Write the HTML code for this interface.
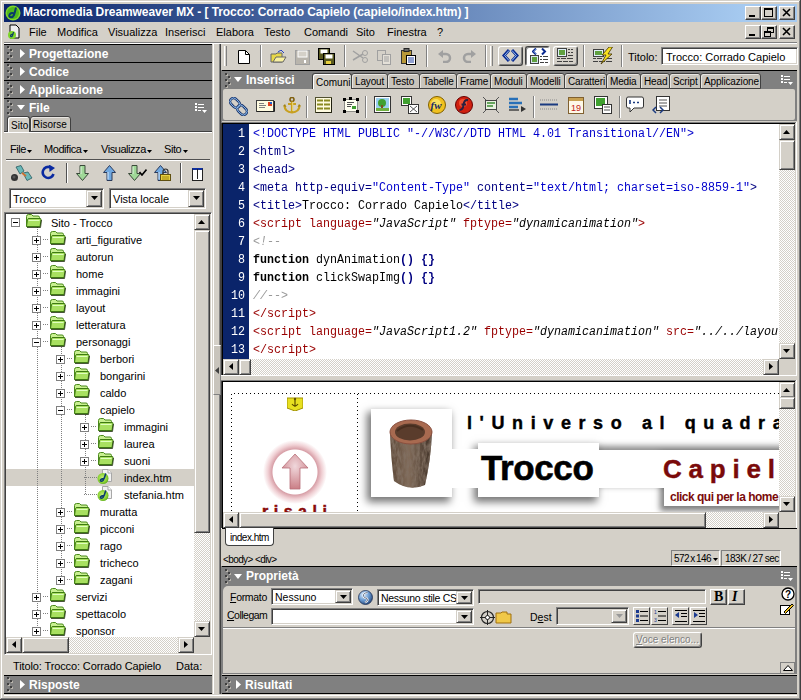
<!DOCTYPE html><html><head><meta charset="utf-8"><style>
*{margin:0;padding:0;box-sizing:content-box}
html,body{width:801px;height:700px;overflow:hidden;background:#D4D0C8}
body{position:relative;font-family:"Liberation Sans",sans-serif;font-size:11px;color:#000}
.p{position:absolute}
.t{white-space:nowrap;line-height:13px}
.rb{background:#D4D0C8;border:1px solid;border-color:#fff #404040 #404040 #fff;box-shadow:inset -1px -1px 0 #808080, inset 1px 1px 0 #D4D0C8}
.sb{background:#D4D0C8;border:1px solid;border-color:#D4D0C8 #404040 #404040 #D4D0C8;box-shadow:inset 1px 1px 0 #fff, inset -1px -1px 0 #808080}
.sk{border:1px solid;border-color:#808080 #fff #fff #808080;box-shadow:inset 1px 1px 0 #404040, inset -1px -1px 0 #D4D0C8}
.hdr{background:#808080;color:#fff;font-weight:bold;font-size:12px}
.mono{font-family:"Liberation Mono",monospace;font-size:11.67px}
.grip{position:absolute;width:6px;height:15px;background-image:linear-gradient(#404040,#404040),linear-gradient(#404040,#404040),linear-gradient(#404040,#404040),linear-gradient(#404040,#404040),linear-gradient(#404040,#404040);background-size:2px 2px;background-repeat:no-repeat;background-position:0 0,3px 3px,0 6px,3px 9px,0 12px}
.griph{position:absolute;width:6px;height:15px;background-image:linear-gradient(#B8B4AC,#B8B4AC),linear-gradient(#B8B4AC,#B8B4AC),linear-gradient(#B8B4AC,#B8B4AC),linear-gradient(#B8B4AC,#B8B4AC),linear-gradient(#B8B4AC,#B8B4AC);background-size:2px 2px;background-repeat:no-repeat;background-position:0 0,3px 3px,0 6px,3px 9px,0 12px}
</style></head><body>

<div class="p" style="left:0px;top:0px;width:801px;height:700px;background:#D4D0C8;"></div>
<div class="p" style="left:1px;top:1px;width:799px;height:1px;background:#fff;"></div>
<div class="p" style="left:1px;top:1px;width:1px;height:698px;background:#fff;"></div>
<div class="p" style="left:0px;top:699px;width:801px;height:1px;background:#404040;"></div>
<div class="p" style="left:800px;top:0px;width:1px;height:700px;background:#404040;"></div>
<div class="p" style="left:1px;top:698px;width:799px;height:1px;background:#808080;"></div>
<div class="p" style="left:799px;top:1px;width:1px;height:698px;background:#808080;"></div>
<div class="p" style="left:4px;top:4px;width:793px;height:18px;background:linear-gradient(to right,#0A246A 0px,#A6CAF0 741px);"></div>
<svg class="p" style="left:5px;top:5px" width="16" height="16" viewBox="0 0 16 16"><circle cx="8" cy="8" r="7.5" fill="#7ED62A"/><circle cx="8" cy="8" r="6" fill="#4FB81C"/><path d="M11 2.5 Q10 7 9 10 Q7.5 13 5 12 Q3.5 11 5 9 Q6.5 7.5 9 8.5" stroke="#0A3A6A" stroke-width="2" fill="none"/></svg>
<div class="p t" style="left:23px;top:6px;color:#fff;font-weight:bold;font-size:12px;letter-spacing:-0.07px;">Macromedia Dreamweaver MX - [ Trocco: Corrado Capielo (capielo/index.htm) ]</div>
<div class="p rb" style="left:745px;top:6px;width:14px;height:12px;"></div>
<div class="p rb" style="left:761px;top:6px;width:14px;height:12px;"></div>
<div class="p rb" style="left:779px;top:6px;width:14px;height:12px;"></div>
<div class="p" style="left:749px;top:15px;width:6px;height:2px;background:#000;"></div>
<div class="p" style="left:764px;top:8px;width:9px;height:9px;border:1px solid #000;border-top-width:2px;box-sizing:border-box;"></div>
<svg class="p" style="left:782px;top:8px" width="10" height="9"><path d="M1 1 L8 8 M8 1 L1 8" stroke="#000" stroke-width="1.6"/></svg>
<svg class="p" style="left:6px;top:24px" width="16" height="16" viewBox="0 0 16 16"><path d="M4 1 H10 L13 4 V14 H4 Z" fill="#eee" stroke="#000"/><circle cx="6" cy="11" r="4" fill="#7ED62A"/><path d="M7.5 8 Q7 11 6 12.5 Q4.5 13 4.5 11.5 Q5 10 7 10.5" stroke="#0A3A6A" stroke-width="1.2" fill="none"/></svg>
<div class="p t" style="left:29px;top:26px;">File</div>
<div class="p t" style="left:57px;top:26px;">Modifica</div>
<div class="p t" style="left:108px;top:26px;">Visualizza</div>
<div class="p t" style="left:165px;top:26px;">Inserisci</div>
<div class="p t" style="left:216px;top:26px;">Elabora</div>
<div class="p t" style="left:264px;top:26px;">Testo</div>
<div class="p t" style="left:304px;top:26px;">Comandi</div>
<div class="p t" style="left:356px;top:26px;">Sito</div>
<div class="p t" style="left:387px;top:26px;">Finestra</div>
<div class="p t" style="left:437px;top:26px;">?</div>
<div class="p rb" style="left:745px;top:25px;width:14px;height:12px;"></div>
<div class="p rb" style="left:761px;top:25px;width:14px;height:12px;"></div>
<div class="p rb" style="left:779px;top:25px;width:14px;height:12px;"></div>
<div class="p" style="left:749px;top:34px;width:6px;height:2px;background:#000;"></div>
<svg class="p" style="left:764px;top:27px" width="10" height="10"><rect x="3.5" y="0.5" width="6" height="5" fill="none" stroke="#000"/><rect x="3" y="0" width="7" height="2" fill="#000"/><rect x="0.5" y="4.5" width="6" height="5" fill="#D4D0C8" stroke="#000"/><rect x="0" y="4" width="7" height="2" fill="#000"/></svg>
<svg class="p" style="left:782px;top:27px" width="10" height="9"><path d="M1 1 L8 8 M8 1 L1 8" stroke="#000" stroke-width="1.6"/></svg>
<div class="p" style="left:4px;top:42px;width:793px;height:1px;background:#808080;"></div>
<div class="p" style="left:4px;top:43px;width:793px;height:1px;background:#fff;"></div>
<div class="p" style="left:4px;top:44px;width:208px;height:1px;background:#000;"></div>
<div class="p" style="left:4px;top:45px;width:208px;height:17px;background:#808080;"></div>
<div class="griph" style="left:8px;top:47px;"></div>
<div class="grip" style="left:7px;top:46px;"></div>
<svg class="p" style="left:20px;top:49px" width="5" height="9"><path d="M0 0 V9 L5 4.5 Z" fill="#fff"/></svg>
<div class="p t" style="left:29px;top:47px;color:#fff;font-weight:bold;font-size:12px;line-height:14px;">Progettazione</div>
<div class="p" style="left:4px;top:62px;width:208px;height:1px;background:#000;"></div>
<div class="p" style="left:4px;top:63px;width:208px;height:17px;background:#808080;"></div>
<div class="griph" style="left:8px;top:65px;"></div>
<div class="grip" style="left:7px;top:64px;"></div>
<svg class="p" style="left:20px;top:67px" width="5" height="9"><path d="M0 0 V9 L5 4.5 Z" fill="#fff"/></svg>
<div class="p t" style="left:29px;top:65px;color:#fff;font-weight:bold;font-size:12px;line-height:14px;">Codice</div>
<div class="p" style="left:4px;top:80px;width:208px;height:1px;background:#000;"></div>
<div class="p" style="left:4px;top:81px;width:208px;height:17px;background:#808080;"></div>
<div class="griph" style="left:8px;top:83px;"></div>
<div class="grip" style="left:7px;top:82px;"></div>
<svg class="p" style="left:20px;top:85px" width="5" height="9"><path d="M0 0 V9 L5 4.5 Z" fill="#fff"/></svg>
<div class="p t" style="left:29px;top:83px;color:#fff;font-weight:bold;font-size:12px;line-height:14px;">Applicazione</div>
<div class="p" style="left:4px;top:98px;width:208px;height:1px;background:#000;"></div>
<div class="p" style="left:4px;top:99px;width:208px;height:33px;background:#808080;"></div>
<div class="griph" style="left:8px;top:101px;"></div>
<div class="grip" style="left:7px;top:100px;"></div>
<svg class="p" style="left:17px;top:105px" width="8" height="5"><path d="M0 0 H8 L4 5 Z" fill="#fff"/></svg>
<div class="p t" style="left:29px;top:101px;color:#fff;font-weight:bold;font-size:12px;line-height:14px;">File</div>
<svg class="p" style="left:195px;top:103px" width="13" height="11"><path d="M0 0 H2 V2 H0 Z M0 3 H2 V5 H0 Z M0 6 H2 V8 H0 Z M3 1 H9 V2 H3 Z M3 4 H9 V5 H3 Z M3 7 H6 V8 H3 Z M7 7 H12 L9.5 10 Z" fill="#fff"/></svg>
<div class="p" style="left:4px;top:131px;width:208px;height:1px;background:#404040;"></div>
<div class="p t" style="left:30px;top:116px;width:39px;height:14px;background:#C8C4BC;border:1px solid #404040;border-radius:3px 3px 0 0;font-size:10px;box-shadow:inset 1px 1px 0 #E8E6E2;"><span style="position:absolute;left:2px;top:1px">Risorse</span></div>
<div class="p t" style="left:7px;top:116px;width:21px;height:16px;background:#D4D0C8;border:1px solid #404040;border-bottom:none;border-radius:3px 3px 0 0;font-size:10px;box-shadow:inset 1px 1px 0 #fff;"><span style="position:absolute;left:3px;top:2px">Sito</span></div>
<div class="p" style="left:4px;top:132px;width:208px;height:1px;background:#fff;"></div>
<div class="p t" style="left:10px;top:143px;letter-spacing:-0.45px;">File</div>
<div class="p t" style="left:44px;top:143px;letter-spacing:-0.45px;">Modifica</div>
<div class="p t" style="left:101px;top:143px;letter-spacing:-0.45px;">Visualizza</div>
<div class="p t" style="left:164px;top:143px;letter-spacing:-0.45px;">Sito</div>
<svg class="p" style="left:27px;top:150px" width="5" height="3"><path d="M0 0 H5 L2.5 3 Z" fill="#000"/></svg>
<svg class="p" style="left:83px;top:150px" width="5" height="3"><path d="M0 0 H5 L2.5 3 Z" fill="#000"/></svg>
<svg class="p" style="left:147px;top:150px" width="5" height="3"><path d="M0 0 H5 L2.5 3 Z" fill="#000"/></svg>
<svg class="p" style="left:183px;top:150px" width="5" height="3"><path d="M0 0 H5 L2.5 3 Z" fill="#000"/></svg>
<div class="p" style="left:6px;top:159px;width:204px;height:1px;background:#505050;"></div>
<div class="p" style="left:6px;top:160px;width:204px;height:1px;background:#fff;"></div>
<div class="p" style="left:66px;top:163px;width:1px;height:20px;background:#505050;"></div>
<div class="p" style="left:67px;top:163px;width:1px;height:20px;background:#fff;"></div>
<div class="p" style="left:180px;top:163px;width:1px;height:20px;background:#505050;"></div>
<div class="p" style="left:181px;top:163px;width:1px;height:20px;background:#fff;"></div>
<svg class="p" style="left:11px;top:165px" width="22" height="17" viewBox="0 0 22 17"><circle cx="3.5" cy="12.5" r="3.5" fill="#333"/><circle cx="3" cy="12" r="1.5" fill="#555"/><path d="M5 2 L10 0.5 L13 6 L9 9 Z" fill="#6AB8B8" stroke="#2A5A60" stroke-width="0.8"/><path d="M12 8 L17 7 L21 13 L16 15.5 Z" fill="#6AB8B8" stroke="#2A5A60" stroke-width="0.8"/><path d="M11 8 L15 11" stroke="#D07030" stroke-width="1.6"/></svg>
<svg class="p" style="left:41px;top:165px" width="15" height="15" viewBox="0 0 15 15"><path d="M12.5 9 A5.5 5.5 0 1 1 9.5 2.4" stroke="#0A2AA0" stroke-width="2.6" fill="none"/><path d="M8 -0.5 L14 3 L8.5 7 Z" fill="#0A2AA0"/></svg>
<svg class="p" style="left:76px;top:165px" width="13" height="16" viewBox="0 0 13 16"><path d="M4 0.5 H9 V8.5 H12.5 L6.5 15.5 L0.5 8.5 H4 Z" fill="#A0D898" stroke="#3A4A3A" stroke-width="1"/><path d="M5 1.5 V9" stroke="#E0F8E0" stroke-width="1"/></svg>
<svg class="p" style="left:103px;top:165px" width="13" height="16" viewBox="0 0 13 16"><path d="M4 15.5 H9 V7.5 H12.5 L6.5 0.5 L0.5 7.5 H4 Z" fill="#70A8E0" stroke="#2A3A5A" stroke-width="1"/><path d="M5 7 V14.5" stroke="#D8ECFF" stroke-width="1"/></svg>
<svg class="p" style="left:128px;top:165px" width="13" height="16" viewBox="0 0 13 16"><path d="M4 0.5 H9 V8.5 H12.5 L6.5 15.5 L0.5 8.5 H4 Z" fill="#A0D898" stroke="#3A4A3A" stroke-width="1"/><path d="M5 1.5 V9" stroke="#E0F8E0" stroke-width="1"/></svg>
<svg class="p" style="left:139px;top:169px" width="8" height="7"><path d="M0.5 3 L3 6 L7.5 0.5" stroke="#000" stroke-width="1.6" fill="none"/></svg>
<svg class="p" style="left:154px;top:165px" width="13" height="16" viewBox="0 0 13 16"><path d="M4 15.5 H9 V7.5 H12.5 L6.5 0.5 L0.5 7.5 H4 Z" fill="#70A8E0" stroke="#2A3A5A" stroke-width="1"/><path d="M5 7 V14.5" stroke="#D8ECFF" stroke-width="1"/></svg>
<svg class="p" style="left:160px;top:168px" width="11" height="13"><path d="M3 6 V3.5 A2.5 2.5 0 0 1 8 3.5 V6" stroke="#333" stroke-width="1.2" fill="none"/><rect x="0.5" y="6.5" width="10" height="6" fill="#E8D040" stroke="#605010"/><path d="M2 9 H9 M2 11 H9" stroke="#A08810"/></svg>
<div class="p" style="left:192px;top:168px;width:9px;height:10px;background:#fff;border:1px solid #222;border-top:2px solid #1030A0;"></div>
<div class="p" style="left:197px;top:169px;width:1px;height:10px;background:#222;"></div>
<div class="p sk" style="left:9px;top:188px;width:93px;height:19px;background:#fff;"></div>
<div class="p t" style="left:13px;top:193px;font-size:11px;">Trocco</div>
<div class="p sb" style="left:86px;top:190px;width:14px;height:15px;"></div>
<svg class="p" style="left:91px;top:196px" width="7" height="4"><path d="M0 0 H7 L3.5 4 Z" fill="#000"/></svg>
<div class="p sk" style="left:109px;top:188px;width:95px;height:19px;background:#fff;"></div>
<div class="p t" style="left:113px;top:193px;font-size:11px;">Vista locale</div>
<div class="p sb" style="left:188px;top:190px;width:14px;height:15px;"></div>
<svg class="p" style="left:193px;top:196px" width="7" height="4"><path d="M0 0 H7 L3.5 4 Z" fill="#000"/></svg>
<div class="p sk" style="left:4px;top:212px;width:206px;height:441px;background:#fff;"></div>
<div class="p" style="left:6px;top:469px;width:188px;height:17px;background:#D4D0C8;"></div>
<div class="p" style="left:37px;top:227px;width:1px;height:403px;background-image:linear-gradient(#808080 1px,transparent 1px);background-size:1px 2px;"></div>
<div class="p" style="left:61px;top:347px;width:1px;height:232px;background-image:linear-gradient(#808080 1px,transparent 1px);background-size:1px 2px;"></div>
<div class="p" style="left:85px;top:415px;width:1px;height:80px;background-image:linear-gradient(#808080 1px,transparent 1px);background-size:1px 2px;"></div>
<div class="p" style="left:11px;top:218px;width:7px;height:7px;border:1px solid #808080;background:#fff;"></div>
<div class="p" style="left:13px;top:222px;width:5px;height:1px;background:#000;"></div>
<svg class="p" style="left:25px;top:214px" width="17" height="14" viewBox="0 0 17 14"><path d="M1.5 12.5 V2.5 Q1.5 0.5 3.5 0.5 H6.5 L8 2 H13 Q14.5 2 14.5 3.5 V5" fill="#C8F090" stroke="#4A8A1A"/><path d="M1.5 12.5 L2.5 5.5 Q2.7 4.5 4 4.5 H15 Q16.3 4.5 16 5.8 L15 12.5 Z" fill="#A8E060" stroke="#3E7A12"/><path d="M3.5 6.5 H14.5" stroke="#E0FFC0" stroke-width="1"/><path d="M2 13.5 H15.5 L16.5 6" stroke="#1A2A08" stroke-width="1" fill="none" opacity="0.8"/></svg>
<div class="p t" style="left:51px;top:217px;font-size:11px;">Sito - Trocco</div>
<div class="p" style="left:32px;top:236px;width:7px;height:7px;border:1px solid #808080;background:#fff;"></div>
<div class="p" style="left:34px;top:240px;width:5px;height:1px;background:#000;"></div>
<div class="p" style="left:36px;top:238px;width:1px;height:5px;background:#000;"></div>
<div class="p" style="left:43px;top:239px;width:6px;height:1px;background-image:linear-gradient(to right,#808080 1px,transparent 1px);background-size:2px 1px;"></div>
<svg class="p" style="left:49px;top:231px" width="17" height="14" viewBox="0 0 17 14"><path d="M1.5 12.5 V2.5 Q1.5 0.5 3.5 0.5 H6.5 L8 2 H13 Q14.5 2 14.5 3.5 V5" fill="#C8F090" stroke="#4A8A1A"/><path d="M1.5 12.5 L2.5 5.5 Q2.7 4.5 4 4.5 H15 Q16.3 4.5 16 5.8 L15 12.5 Z" fill="#A8E060" stroke="#3E7A12"/><path d="M3.5 6.5 H14.5" stroke="#E0FFC0" stroke-width="1"/><path d="M2 13.5 H15.5 L16.5 6" stroke="#1A2A08" stroke-width="1" fill="none" opacity="0.8"/></svg>
<div class="p t" style="left:76px;top:234px;font-size:11px;">arti_figurative</div>
<div class="p" style="left:32px;top:253px;width:7px;height:7px;border:1px solid #808080;background:#fff;"></div>
<div class="p" style="left:34px;top:257px;width:5px;height:1px;background:#000;"></div>
<div class="p" style="left:36px;top:255px;width:1px;height:5px;background:#000;"></div>
<div class="p" style="left:43px;top:256px;width:6px;height:1px;background-image:linear-gradient(to right,#808080 1px,transparent 1px);background-size:2px 1px;"></div>
<svg class="p" style="left:49px;top:248px" width="17" height="14" viewBox="0 0 17 14"><path d="M1.5 12.5 V2.5 Q1.5 0.5 3.5 0.5 H6.5 L8 2 H13 Q14.5 2 14.5 3.5 V5" fill="#C8F090" stroke="#4A8A1A"/><path d="M1.5 12.5 L2.5 5.5 Q2.7 4.5 4 4.5 H15 Q16.3 4.5 16 5.8 L15 12.5 Z" fill="#A8E060" stroke="#3E7A12"/><path d="M3.5 6.5 H14.5" stroke="#E0FFC0" stroke-width="1"/><path d="M2 13.5 H15.5 L16.5 6" stroke="#1A2A08" stroke-width="1" fill="none" opacity="0.8"/></svg>
<div class="p t" style="left:76px;top:251px;font-size:11px;">autorun</div>
<div class="p" style="left:32px;top:270px;width:7px;height:7px;border:1px solid #808080;background:#fff;"></div>
<div class="p" style="left:34px;top:274px;width:5px;height:1px;background:#000;"></div>
<div class="p" style="left:36px;top:272px;width:1px;height:5px;background:#000;"></div>
<div class="p" style="left:43px;top:273px;width:6px;height:1px;background-image:linear-gradient(to right,#808080 1px,transparent 1px);background-size:2px 1px;"></div>
<svg class="p" style="left:49px;top:265px" width="17" height="14" viewBox="0 0 17 14"><path d="M1.5 12.5 V2.5 Q1.5 0.5 3.5 0.5 H6.5 L8 2 H13 Q14.5 2 14.5 3.5 V5" fill="#C8F090" stroke="#4A8A1A"/><path d="M1.5 12.5 L2.5 5.5 Q2.7 4.5 4 4.5 H15 Q16.3 4.5 16 5.8 L15 12.5 Z" fill="#A8E060" stroke="#3E7A12"/><path d="M3.5 6.5 H14.5" stroke="#E0FFC0" stroke-width="1"/><path d="M2 13.5 H15.5 L16.5 6" stroke="#1A2A08" stroke-width="1" fill="none" opacity="0.8"/></svg>
<div class="p t" style="left:76px;top:268px;font-size:11px;">home</div>
<div class="p" style="left:32px;top:287px;width:7px;height:7px;border:1px solid #808080;background:#fff;"></div>
<div class="p" style="left:34px;top:291px;width:5px;height:1px;background:#000;"></div>
<div class="p" style="left:36px;top:289px;width:1px;height:5px;background:#000;"></div>
<div class="p" style="left:43px;top:290px;width:6px;height:1px;background-image:linear-gradient(to right,#808080 1px,transparent 1px);background-size:2px 1px;"></div>
<svg class="p" style="left:49px;top:282px" width="17" height="14" viewBox="0 0 17 14"><path d="M1.5 12.5 V2.5 Q1.5 0.5 3.5 0.5 H6.5 L8 2 H13 Q14.5 2 14.5 3.5 V5" fill="#C8F090" stroke="#4A8A1A"/><path d="M1.5 12.5 L2.5 5.5 Q2.7 4.5 4 4.5 H15 Q16.3 4.5 16 5.8 L15 12.5 Z" fill="#A8E060" stroke="#3E7A12"/><path d="M3.5 6.5 H14.5" stroke="#E0FFC0" stroke-width="1"/><path d="M2 13.5 H15.5 L16.5 6" stroke="#1A2A08" stroke-width="1" fill="none" opacity="0.8"/></svg>
<div class="p t" style="left:76px;top:285px;font-size:11px;">immagini</div>
<div class="p" style="left:32px;top:304px;width:7px;height:7px;border:1px solid #808080;background:#fff;"></div>
<div class="p" style="left:34px;top:308px;width:5px;height:1px;background:#000;"></div>
<div class="p" style="left:36px;top:306px;width:1px;height:5px;background:#000;"></div>
<div class="p" style="left:43px;top:307px;width:6px;height:1px;background-image:linear-gradient(to right,#808080 1px,transparent 1px);background-size:2px 1px;"></div>
<svg class="p" style="left:49px;top:299px" width="17" height="14" viewBox="0 0 17 14"><path d="M1.5 12.5 V2.5 Q1.5 0.5 3.5 0.5 H6.5 L8 2 H13 Q14.5 2 14.5 3.5 V5" fill="#C8F090" stroke="#4A8A1A"/><path d="M1.5 12.5 L2.5 5.5 Q2.7 4.5 4 4.5 H15 Q16.3 4.5 16 5.8 L15 12.5 Z" fill="#A8E060" stroke="#3E7A12"/><path d="M3.5 6.5 H14.5" stroke="#E0FFC0" stroke-width="1"/><path d="M2 13.5 H15.5 L16.5 6" stroke="#1A2A08" stroke-width="1" fill="none" opacity="0.8"/></svg>
<div class="p t" style="left:76px;top:302px;font-size:11px;">layout</div>
<div class="p" style="left:32px;top:321px;width:7px;height:7px;border:1px solid #808080;background:#fff;"></div>
<div class="p" style="left:34px;top:325px;width:5px;height:1px;background:#000;"></div>
<div class="p" style="left:36px;top:323px;width:1px;height:5px;background:#000;"></div>
<div class="p" style="left:43px;top:324px;width:6px;height:1px;background-image:linear-gradient(to right,#808080 1px,transparent 1px);background-size:2px 1px;"></div>
<svg class="p" style="left:49px;top:316px" width="17" height="14" viewBox="0 0 17 14"><path d="M1.5 12.5 V2.5 Q1.5 0.5 3.5 0.5 H6.5 L8 2 H13 Q14.5 2 14.5 3.5 V5" fill="#C8F090" stroke="#4A8A1A"/><path d="M1.5 12.5 L2.5 5.5 Q2.7 4.5 4 4.5 H15 Q16.3 4.5 16 5.8 L15 12.5 Z" fill="#A8E060" stroke="#3E7A12"/><path d="M3.5 6.5 H14.5" stroke="#E0FFC0" stroke-width="1"/><path d="M2 13.5 H15.5 L16.5 6" stroke="#1A2A08" stroke-width="1" fill="none" opacity="0.8"/></svg>
<div class="p t" style="left:76px;top:319px;font-size:11px;">letteratura</div>
<div class="p" style="left:32px;top:338px;width:7px;height:7px;border:1px solid #808080;background:#fff;"></div>
<div class="p" style="left:34px;top:342px;width:5px;height:1px;background:#000;"></div>
<div class="p" style="left:43px;top:341px;width:6px;height:1px;background-image:linear-gradient(to right,#808080 1px,transparent 1px);background-size:2px 1px;"></div>
<svg class="p" style="left:49px;top:333px" width="17" height="14" viewBox="0 0 17 14"><path d="M1.5 12.5 V2.5 Q1.5 0.5 3.5 0.5 H6.5 L8 2 H13 Q14.5 2 14.5 3.5 V5" fill="#C8F090" stroke="#4A8A1A"/><path d="M1.5 12.5 L2.5 5.5 Q2.7 4.5 4 4.5 H15 Q16.3 4.5 16 5.8 L15 12.5 Z" fill="#A8E060" stroke="#3E7A12"/><path d="M3.5 6.5 H14.5" stroke="#E0FFC0" stroke-width="1"/><path d="M2 13.5 H15.5 L16.5 6" stroke="#1A2A08" stroke-width="1" fill="none" opacity="0.8"/></svg>
<div class="p t" style="left:76px;top:336px;font-size:11px;">personaggi</div>
<div class="p" style="left:56px;top:355px;width:7px;height:7px;border:1px solid #808080;background:#fff;"></div>
<div class="p" style="left:58px;top:359px;width:5px;height:1px;background:#000;"></div>
<div class="p" style="left:60px;top:357px;width:1px;height:5px;background:#000;"></div>
<div class="p" style="left:67px;top:358px;width:6px;height:1px;background-image:linear-gradient(to right,#808080 1px,transparent 1px);background-size:2px 1px;"></div>
<svg class="p" style="left:73px;top:350px" width="17" height="14" viewBox="0 0 17 14"><path d="M1.5 12.5 V2.5 Q1.5 0.5 3.5 0.5 H6.5 L8 2 H13 Q14.5 2 14.5 3.5 V5" fill="#C8F090" stroke="#4A8A1A"/><path d="M1.5 12.5 L2.5 5.5 Q2.7 4.5 4 4.5 H15 Q16.3 4.5 16 5.8 L15 12.5 Z" fill="#A8E060" stroke="#3E7A12"/><path d="M3.5 6.5 H14.5" stroke="#E0FFC0" stroke-width="1"/><path d="M2 13.5 H15.5 L16.5 6" stroke="#1A2A08" stroke-width="1" fill="none" opacity="0.8"/></svg>
<div class="p t" style="left:100px;top:353px;font-size:11px;">berbori</div>
<div class="p" style="left:56px;top:372px;width:7px;height:7px;border:1px solid #808080;background:#fff;"></div>
<div class="p" style="left:58px;top:376px;width:5px;height:1px;background:#000;"></div>
<div class="p" style="left:60px;top:374px;width:1px;height:5px;background:#000;"></div>
<div class="p" style="left:67px;top:375px;width:6px;height:1px;background-image:linear-gradient(to right,#808080 1px,transparent 1px);background-size:2px 1px;"></div>
<svg class="p" style="left:73px;top:367px" width="17" height="14" viewBox="0 0 17 14"><path d="M1.5 12.5 V2.5 Q1.5 0.5 3.5 0.5 H6.5 L8 2 H13 Q14.5 2 14.5 3.5 V5" fill="#C8F090" stroke="#4A8A1A"/><path d="M1.5 12.5 L2.5 5.5 Q2.7 4.5 4 4.5 H15 Q16.3 4.5 16 5.8 L15 12.5 Z" fill="#A8E060" stroke="#3E7A12"/><path d="M3.5 6.5 H14.5" stroke="#E0FFC0" stroke-width="1"/><path d="M2 13.5 H15.5 L16.5 6" stroke="#1A2A08" stroke-width="1" fill="none" opacity="0.8"/></svg>
<div class="p t" style="left:100px;top:370px;font-size:11px;">bongarini</div>
<div class="p" style="left:56px;top:389px;width:7px;height:7px;border:1px solid #808080;background:#fff;"></div>
<div class="p" style="left:58px;top:393px;width:5px;height:1px;background:#000;"></div>
<div class="p" style="left:60px;top:391px;width:1px;height:5px;background:#000;"></div>
<div class="p" style="left:67px;top:392px;width:6px;height:1px;background-image:linear-gradient(to right,#808080 1px,transparent 1px);background-size:2px 1px;"></div>
<svg class="p" style="left:73px;top:384px" width="17" height="14" viewBox="0 0 17 14"><path d="M1.5 12.5 V2.5 Q1.5 0.5 3.5 0.5 H6.5 L8 2 H13 Q14.5 2 14.5 3.5 V5" fill="#C8F090" stroke="#4A8A1A"/><path d="M1.5 12.5 L2.5 5.5 Q2.7 4.5 4 4.5 H15 Q16.3 4.5 16 5.8 L15 12.5 Z" fill="#A8E060" stroke="#3E7A12"/><path d="M3.5 6.5 H14.5" stroke="#E0FFC0" stroke-width="1"/><path d="M2 13.5 H15.5 L16.5 6" stroke="#1A2A08" stroke-width="1" fill="none" opacity="0.8"/></svg>
<div class="p t" style="left:100px;top:387px;font-size:11px;">caldo</div>
<div class="p" style="left:56px;top:406px;width:7px;height:7px;border:1px solid #808080;background:#fff;"></div>
<div class="p" style="left:58px;top:410px;width:5px;height:1px;background:#000;"></div>
<div class="p" style="left:67px;top:409px;width:6px;height:1px;background-image:linear-gradient(to right,#808080 1px,transparent 1px);background-size:2px 1px;"></div>
<svg class="p" style="left:73px;top:401px" width="17" height="14" viewBox="0 0 17 14"><path d="M1.5 12.5 V2.5 Q1.5 0.5 3.5 0.5 H6.5 L8 2 H13 Q14.5 2 14.5 3.5 V5" fill="#C8F090" stroke="#4A8A1A"/><path d="M1.5 12.5 L2.5 5.5 Q2.7 4.5 4 4.5 H15 Q16.3 4.5 16 5.8 L15 12.5 Z" fill="#A8E060" stroke="#3E7A12"/><path d="M3.5 6.5 H14.5" stroke="#E0FFC0" stroke-width="1"/><path d="M2 13.5 H15.5 L16.5 6" stroke="#1A2A08" stroke-width="1" fill="none" opacity="0.8"/></svg>
<div class="p t" style="left:100px;top:404px;font-size:11px;">capielo</div>
<div class="p" style="left:80px;top:423px;width:7px;height:7px;border:1px solid #808080;background:#fff;"></div>
<div class="p" style="left:82px;top:427px;width:5px;height:1px;background:#000;"></div>
<div class="p" style="left:84px;top:425px;width:1px;height:5px;background:#000;"></div>
<div class="p" style="left:91px;top:426px;width:6px;height:1px;background-image:linear-gradient(to right,#808080 1px,transparent 1px);background-size:2px 1px;"></div>
<svg class="p" style="left:97px;top:418px" width="17" height="14" viewBox="0 0 17 14"><path d="M1.5 12.5 V2.5 Q1.5 0.5 3.5 0.5 H6.5 L8 2 H13 Q14.5 2 14.5 3.5 V5" fill="#C8F090" stroke="#4A8A1A"/><path d="M1.5 12.5 L2.5 5.5 Q2.7 4.5 4 4.5 H15 Q16.3 4.5 16 5.8 L15 12.5 Z" fill="#A8E060" stroke="#3E7A12"/><path d="M3.5 6.5 H14.5" stroke="#E0FFC0" stroke-width="1"/><path d="M2 13.5 H15.5 L16.5 6" stroke="#1A2A08" stroke-width="1" fill="none" opacity="0.8"/></svg>
<div class="p t" style="left:124px;top:421px;font-size:11px;">immagini</div>
<div class="p" style="left:80px;top:440px;width:7px;height:7px;border:1px solid #808080;background:#fff;"></div>
<div class="p" style="left:82px;top:444px;width:5px;height:1px;background:#000;"></div>
<div class="p" style="left:84px;top:442px;width:1px;height:5px;background:#000;"></div>
<div class="p" style="left:91px;top:443px;width:6px;height:1px;background-image:linear-gradient(to right,#808080 1px,transparent 1px);background-size:2px 1px;"></div>
<svg class="p" style="left:97px;top:435px" width="17" height="14" viewBox="0 0 17 14"><path d="M1.5 12.5 V2.5 Q1.5 0.5 3.5 0.5 H6.5 L8 2 H13 Q14.5 2 14.5 3.5 V5" fill="#C8F090" stroke="#4A8A1A"/><path d="M1.5 12.5 L2.5 5.5 Q2.7 4.5 4 4.5 H15 Q16.3 4.5 16 5.8 L15 12.5 Z" fill="#A8E060" stroke="#3E7A12"/><path d="M3.5 6.5 H14.5" stroke="#E0FFC0" stroke-width="1"/><path d="M2 13.5 H15.5 L16.5 6" stroke="#1A2A08" stroke-width="1" fill="none" opacity="0.8"/></svg>
<div class="p t" style="left:124px;top:438px;font-size:11px;">laurea</div>
<div class="p" style="left:80px;top:457px;width:7px;height:7px;border:1px solid #808080;background:#fff;"></div>
<div class="p" style="left:82px;top:461px;width:5px;height:1px;background:#000;"></div>
<div class="p" style="left:84px;top:459px;width:1px;height:5px;background:#000;"></div>
<div class="p" style="left:91px;top:460px;width:6px;height:1px;background-image:linear-gradient(to right,#808080 1px,transparent 1px);background-size:2px 1px;"></div>
<svg class="p" style="left:97px;top:452px" width="17" height="14" viewBox="0 0 17 14"><path d="M1.5 12.5 V2.5 Q1.5 0.5 3.5 0.5 H6.5 L8 2 H13 Q14.5 2 14.5 3.5 V5" fill="#C8F090" stroke="#4A8A1A"/><path d="M1.5 12.5 L2.5 5.5 Q2.7 4.5 4 4.5 H15 Q16.3 4.5 16 5.8 L15 12.5 Z" fill="#A8E060" stroke="#3E7A12"/><path d="M3.5 6.5 H14.5" stroke="#E0FFC0" stroke-width="1"/><path d="M2 13.5 H15.5 L16.5 6" stroke="#1A2A08" stroke-width="1" fill="none" opacity="0.8"/></svg>
<div class="p t" style="left:124px;top:455px;font-size:11px;">suoni</div>
<div class="p" style="left:84px;top:477px;width:13px;height:1px;background-image:linear-gradient(to right,#808080 1px,transparent 1px);background-size:2px 1px;"></div>
<svg class="p" style="left:97px;top:469px" width="16" height="16" viewBox="0 0 16 16"><path d="M5.5 0.5 H11 L14.5 4 V12.5 H5.5 Z" fill="#F2F2F2" stroke="#A8A8A8"/><path d="M11 0.5 V4 H14.5" fill="#fff" stroke="#A8A8A8"/><defs><radialGradient id="dwb" cx="0.45" cy="0.45" r="0.6"><stop offset="0" stop-color="#C8F080"/><stop offset="0.7" stop-color="#88D030"/><stop offset="1" stop-color="#58A818"/></radialGradient></defs><circle cx="6" cy="9.5" r="5.5" fill="url(#dwb)"/><path d="M8.6 5 Q7.6 9 6 11.5 Q4.2 13 3.4 11.6 Q3.4 10 6.8 9.6" stroke="#0A3A70" stroke-width="1.5" fill="none" stroke-linecap="round"/></svg>
<div class="p t" style="left:124px;top:472px;font-size:11px;">index.htm</div>
<div class="p" style="left:84px;top:494px;width:13px;height:1px;background-image:linear-gradient(to right,#808080 1px,transparent 1px);background-size:2px 1px;"></div>
<svg class="p" style="left:97px;top:486px" width="16" height="16" viewBox="0 0 16 16"><path d="M5.5 0.5 H11 L14.5 4 V12.5 H5.5 Z" fill="#F2F2F2" stroke="#A8A8A8"/><path d="M11 0.5 V4 H14.5" fill="#fff" stroke="#A8A8A8"/><defs><radialGradient id="dwb" cx="0.45" cy="0.45" r="0.6"><stop offset="0" stop-color="#C8F080"/><stop offset="0.7" stop-color="#88D030"/><stop offset="1" stop-color="#58A818"/></radialGradient></defs><circle cx="6" cy="9.5" r="5.5" fill="url(#dwb)"/><path d="M8.6 5 Q7.6 9 6 11.5 Q4.2 13 3.4 11.6 Q3.4 10 6.8 9.6" stroke="#0A3A70" stroke-width="1.5" fill="none" stroke-linecap="round"/></svg>
<div class="p t" style="left:124px;top:489px;font-size:11px;">stefania.htm</div>
<div class="p" style="left:56px;top:508px;width:7px;height:7px;border:1px solid #808080;background:#fff;"></div>
<div class="p" style="left:58px;top:512px;width:5px;height:1px;background:#000;"></div>
<div class="p" style="left:60px;top:510px;width:1px;height:5px;background:#000;"></div>
<div class="p" style="left:67px;top:511px;width:6px;height:1px;background-image:linear-gradient(to right,#808080 1px,transparent 1px);background-size:2px 1px;"></div>
<svg class="p" style="left:73px;top:503px" width="17" height="14" viewBox="0 0 17 14"><path d="M1.5 12.5 V2.5 Q1.5 0.5 3.5 0.5 H6.5 L8 2 H13 Q14.5 2 14.5 3.5 V5" fill="#C8F090" stroke="#4A8A1A"/><path d="M1.5 12.5 L2.5 5.5 Q2.7 4.5 4 4.5 H15 Q16.3 4.5 16 5.8 L15 12.5 Z" fill="#A8E060" stroke="#3E7A12"/><path d="M3.5 6.5 H14.5" stroke="#E0FFC0" stroke-width="1"/><path d="M2 13.5 H15.5 L16.5 6" stroke="#1A2A08" stroke-width="1" fill="none" opacity="0.8"/></svg>
<div class="p t" style="left:100px;top:506px;font-size:11px;">muratta</div>
<div class="p" style="left:56px;top:525px;width:7px;height:7px;border:1px solid #808080;background:#fff;"></div>
<div class="p" style="left:58px;top:529px;width:5px;height:1px;background:#000;"></div>
<div class="p" style="left:60px;top:527px;width:1px;height:5px;background:#000;"></div>
<div class="p" style="left:67px;top:528px;width:6px;height:1px;background-image:linear-gradient(to right,#808080 1px,transparent 1px);background-size:2px 1px;"></div>
<svg class="p" style="left:73px;top:520px" width="17" height="14" viewBox="0 0 17 14"><path d="M1.5 12.5 V2.5 Q1.5 0.5 3.5 0.5 H6.5 L8 2 H13 Q14.5 2 14.5 3.5 V5" fill="#C8F090" stroke="#4A8A1A"/><path d="M1.5 12.5 L2.5 5.5 Q2.7 4.5 4 4.5 H15 Q16.3 4.5 16 5.8 L15 12.5 Z" fill="#A8E060" stroke="#3E7A12"/><path d="M3.5 6.5 H14.5" stroke="#E0FFC0" stroke-width="1"/><path d="M2 13.5 H15.5 L16.5 6" stroke="#1A2A08" stroke-width="1" fill="none" opacity="0.8"/></svg>
<div class="p t" style="left:100px;top:523px;font-size:11px;">picconi</div>
<div class="p" style="left:56px;top:542px;width:7px;height:7px;border:1px solid #808080;background:#fff;"></div>
<div class="p" style="left:58px;top:546px;width:5px;height:1px;background:#000;"></div>
<div class="p" style="left:60px;top:544px;width:1px;height:5px;background:#000;"></div>
<div class="p" style="left:67px;top:545px;width:6px;height:1px;background-image:linear-gradient(to right,#808080 1px,transparent 1px);background-size:2px 1px;"></div>
<svg class="p" style="left:73px;top:537px" width="17" height="14" viewBox="0 0 17 14"><path d="M1.5 12.5 V2.5 Q1.5 0.5 3.5 0.5 H6.5 L8 2 H13 Q14.5 2 14.5 3.5 V5" fill="#C8F090" stroke="#4A8A1A"/><path d="M1.5 12.5 L2.5 5.5 Q2.7 4.5 4 4.5 H15 Q16.3 4.5 16 5.8 L15 12.5 Z" fill="#A8E060" stroke="#3E7A12"/><path d="M3.5 6.5 H14.5" stroke="#E0FFC0" stroke-width="1"/><path d="M2 13.5 H15.5 L16.5 6" stroke="#1A2A08" stroke-width="1" fill="none" opacity="0.8"/></svg>
<div class="p t" style="left:100px;top:540px;font-size:11px;">rago</div>
<div class="p" style="left:56px;top:559px;width:7px;height:7px;border:1px solid #808080;background:#fff;"></div>
<div class="p" style="left:58px;top:563px;width:5px;height:1px;background:#000;"></div>
<div class="p" style="left:60px;top:561px;width:1px;height:5px;background:#000;"></div>
<div class="p" style="left:67px;top:562px;width:6px;height:1px;background-image:linear-gradient(to right,#808080 1px,transparent 1px);background-size:2px 1px;"></div>
<svg class="p" style="left:73px;top:554px" width="17" height="14" viewBox="0 0 17 14"><path d="M1.5 12.5 V2.5 Q1.5 0.5 3.5 0.5 H6.5 L8 2 H13 Q14.5 2 14.5 3.5 V5" fill="#C8F090" stroke="#4A8A1A"/><path d="M1.5 12.5 L2.5 5.5 Q2.7 4.5 4 4.5 H15 Q16.3 4.5 16 5.8 L15 12.5 Z" fill="#A8E060" stroke="#3E7A12"/><path d="M3.5 6.5 H14.5" stroke="#E0FFC0" stroke-width="1"/><path d="M2 13.5 H15.5 L16.5 6" stroke="#1A2A08" stroke-width="1" fill="none" opacity="0.8"/></svg>
<div class="p t" style="left:100px;top:557px;font-size:11px;">tricheco</div>
<div class="p" style="left:56px;top:576px;width:7px;height:7px;border:1px solid #808080;background:#fff;"></div>
<div class="p" style="left:58px;top:580px;width:5px;height:1px;background:#000;"></div>
<div class="p" style="left:60px;top:578px;width:1px;height:5px;background:#000;"></div>
<div class="p" style="left:67px;top:579px;width:6px;height:1px;background-image:linear-gradient(to right,#808080 1px,transparent 1px);background-size:2px 1px;"></div>
<svg class="p" style="left:73px;top:571px" width="17" height="14" viewBox="0 0 17 14"><path d="M1.5 12.5 V2.5 Q1.5 0.5 3.5 0.5 H6.5 L8 2 H13 Q14.5 2 14.5 3.5 V5" fill="#C8F090" stroke="#4A8A1A"/><path d="M1.5 12.5 L2.5 5.5 Q2.7 4.5 4 4.5 H15 Q16.3 4.5 16 5.8 L15 12.5 Z" fill="#A8E060" stroke="#3E7A12"/><path d="M3.5 6.5 H14.5" stroke="#E0FFC0" stroke-width="1"/><path d="M2 13.5 H15.5 L16.5 6" stroke="#1A2A08" stroke-width="1" fill="none" opacity="0.8"/></svg>
<div class="p t" style="left:100px;top:574px;font-size:11px;">zagani</div>
<div class="p" style="left:32px;top:593px;width:7px;height:7px;border:1px solid #808080;background:#fff;"></div>
<div class="p" style="left:34px;top:597px;width:5px;height:1px;background:#000;"></div>
<div class="p" style="left:36px;top:595px;width:1px;height:5px;background:#000;"></div>
<div class="p" style="left:43px;top:596px;width:6px;height:1px;background-image:linear-gradient(to right,#808080 1px,transparent 1px);background-size:2px 1px;"></div>
<svg class="p" style="left:49px;top:588px" width="17" height="14" viewBox="0 0 17 14"><path d="M1.5 12.5 V2.5 Q1.5 0.5 3.5 0.5 H6.5 L8 2 H13 Q14.5 2 14.5 3.5 V5" fill="#C8F090" stroke="#4A8A1A"/><path d="M1.5 12.5 L2.5 5.5 Q2.7 4.5 4 4.5 H15 Q16.3 4.5 16 5.8 L15 12.5 Z" fill="#A8E060" stroke="#3E7A12"/><path d="M3.5 6.5 H14.5" stroke="#E0FFC0" stroke-width="1"/><path d="M2 13.5 H15.5 L16.5 6" stroke="#1A2A08" stroke-width="1" fill="none" opacity="0.8"/></svg>
<div class="p t" style="left:76px;top:591px;font-size:11px;">servizi</div>
<div class="p" style="left:32px;top:610px;width:7px;height:7px;border:1px solid #808080;background:#fff;"></div>
<div class="p" style="left:34px;top:614px;width:5px;height:1px;background:#000;"></div>
<div class="p" style="left:36px;top:612px;width:1px;height:5px;background:#000;"></div>
<div class="p" style="left:43px;top:613px;width:6px;height:1px;background-image:linear-gradient(to right,#808080 1px,transparent 1px);background-size:2px 1px;"></div>
<svg class="p" style="left:49px;top:605px" width="17" height="14" viewBox="0 0 17 14"><path d="M1.5 12.5 V2.5 Q1.5 0.5 3.5 0.5 H6.5 L8 2 H13 Q14.5 2 14.5 3.5 V5" fill="#C8F090" stroke="#4A8A1A"/><path d="M1.5 12.5 L2.5 5.5 Q2.7 4.5 4 4.5 H15 Q16.3 4.5 16 5.8 L15 12.5 Z" fill="#A8E060" stroke="#3E7A12"/><path d="M3.5 6.5 H14.5" stroke="#E0FFC0" stroke-width="1"/><path d="M2 13.5 H15.5 L16.5 6" stroke="#1A2A08" stroke-width="1" fill="none" opacity="0.8"/></svg>
<div class="p t" style="left:76px;top:608px;font-size:11px;">spettacolo</div>
<div class="p" style="left:32px;top:627px;width:7px;height:7px;border:1px solid #808080;background:#fff;"></div>
<div class="p" style="left:34px;top:631px;width:5px;height:1px;background:#000;"></div>
<div class="p" style="left:36px;top:629px;width:1px;height:5px;background:#000;"></div>
<div class="p" style="left:43px;top:630px;width:6px;height:1px;background-image:linear-gradient(to right,#808080 1px,transparent 1px);background-size:2px 1px;"></div>
<svg class="p" style="left:49px;top:622px" width="17" height="14" viewBox="0 0 17 14"><path d="M1.5 12.5 V2.5 Q1.5 0.5 3.5 0.5 H6.5 L8 2 H13 Q14.5 2 14.5 3.5 V5" fill="#C8F090" stroke="#4A8A1A"/><path d="M1.5 12.5 L2.5 5.5 Q2.7 4.5 4 4.5 H15 Q16.3 4.5 16 5.8 L15 12.5 Z" fill="#A8E060" stroke="#3E7A12"/><path d="M3.5 6.5 H14.5" stroke="#E0FFC0" stroke-width="1"/><path d="M2 13.5 H15.5 L16.5 6" stroke="#1A2A08" stroke-width="1" fill="none" opacity="0.8"/></svg>
<div class="p t" style="left:76px;top:625px;font-size:11px;">sponsor</div>
<div class="p" style="left:194px;top:214px;width:16px;height:423px;background:repeating-conic-gradient(#D4D0C8 0 25%,#fff 0 50%) 0 0/2px 2px;"></div>
<div class="p sb" style="left:194px;top:214px;width:14px;height:14px;"></div>
<svg class="p" style="left:198px;top:220px" width="7" height="4"><path d="M0 4 H7 L3.5 0 Z" fill="#000"/></svg>
<div class="p sb" style="left:194px;top:621px;width:14px;height:14px;"></div>
<svg class="p" style="left:198px;top:627px" width="7" height="4"><path d="M0 0 H7 L3.5 4 Z" fill="#000"/></svg>
<div class="p sb" style="left:194px;top:230px;width:14px;height:301px;"></div>
<div class="p" style="left:6px;top:637px;width:188px;height:16px;background:repeating-conic-gradient(#D4D0C8 0 25%,#fff 0 50%) 0 0/2px 2px;"></div>
<div class="p sb" style="left:6px;top:637px;width:14px;height:14px;"></div>
<svg class="p" style="left:12px;top:641px" width="4" height="7"><path d="M4 0 V7 L0 3.5 Z" fill="#000"/></svg>
<div class="p sb" style="left:178px;top:637px;width:14px;height:14px;"></div>
<svg class="p" style="left:184px;top:641px" width="4" height="7"><path d="M0 0 V7 L4 3.5 Z" fill="#000"/></svg>
<div class="p sb" style="left:22px;top:637px;width:45px;height:14px;"></div>
<div class="p" style="left:194px;top:637px;width:16px;height:16px;background:#D4D0C8;"></div>
<div class="p t" style="left:13px;top:660px;font-size:11px;letter-spacing:-0.12px;">Titolo: Trocco: Corrado Capielo</div>
<div class="p t" style="left:176px;top:660px;font-size:11px;">Data:</div>
<div class="p" style="left:4px;top:675px;width:208px;height:1px;background:#000;"></div>
<div class="p" style="left:4px;top:676px;width:208px;height:17px;background:#808080;"></div>
<div class="griph" style="left:8px;top:678px;"></div>
<div class="grip" style="left:7px;top:677px;"></div>
<svg class="p" style="left:20px;top:680px" width="5" height="9"><path d="M0 0 V9 L5 4.5 Z" fill="#fff"/></svg>
<div class="p t" style="left:29px;top:678px;color:#fff;font-weight:bold;font-size:12px;line-height:14px;">Risposte</div>
<div class="p" style="left:4px;top:693px;width:208px;height:1px;background:#000;"></div>
<div class="p" style="left:213px;top:44px;width:1px;height:650px;background:#fff;"></div>
<div class="p" style="left:219px;top:44px;width:1px;height:650px;background:#808080;"></div>
<div class="p" style="left:220px;top:44px;width:1px;height:650px;background:#404040;"></div>
<div class="p" style="left:221px;top:122px;width:1px;height:254px;background:#404040;"></div>
<div class="p" style="left:221px;top:380px;width:1px;height:148px;background:#404040;"></div>
<div class="p" style="left:221px;top:70px;width:1px;height:52px;background:#808080;"></div>
<div class="p" style="left:221px;top:566px;width:1px;height:128px;background:#808080;"></div>
<div class="p" style="left:213px;top:345px;width:6px;height:48px;border:1px solid;border-color:#fff #808080 #808080 #fff;background:#C8C4BC;"></div>
<svg class="p" style="left:215px;top:367px" width="4" height="7"><path d="M4 0 V7 L0 3.5 Z" fill="#404040"/></svg>
<div class="p" style="left:222px;top:44px;width:575px;height:26px;background:#D4D0C8;"></div>
<div class="p" style="left:224px;top:46px;width:1px;height:20px;background:#fff;"></div>
<div class="p" style="left:225px;top:46px;width:1px;height:20px;background:#D4D0C8;"></div>
<div class="p" style="left:226px;top:46px;width:1px;height:20px;background:#808080;"></div>
<div class="p" style="left:260px;top:45px;width:1px;height:22px;background:#808080;"></div>
<div class="p" style="left:261px;top:45px;width:1px;height:22px;background:#fff;"></div>
<div class="p" style="left:344px;top:45px;width:1px;height:22px;background:#808080;"></div>
<div class="p" style="left:345px;top:45px;width:1px;height:22px;background:#fff;"></div>
<div class="p" style="left:426px;top:45px;width:1px;height:22px;background:#808080;"></div>
<div class="p" style="left:427px;top:45px;width:1px;height:22px;background:#fff;"></div>
<div class="p" style="left:485px;top:45px;width:1px;height:22px;background:#808080;"></div>
<div class="p" style="left:486px;top:45px;width:1px;height:22px;background:#fff;"></div>
<div class="p" style="left:583px;top:45px;width:1px;height:22px;background:#808080;"></div>
<div class="p" style="left:584px;top:45px;width:1px;height:22px;background:#fff;"></div>
<div class="p" style="left:621px;top:45px;width:1px;height:22px;background:#808080;"></div>
<div class="p" style="left:622px;top:45px;width:1px;height:22px;background:#fff;"></div>
<div class="p" style="left:490px;top:46px;width:1px;height:20px;background:#fff;"></div>
<div class="p" style="left:492px;top:46px;width:1px;height:20px;background:#808080;"></div>
<svg class="p" style="left:238px;top:50px" width="12" height="14"><path d="M0.5 0.5 H7.5 L11.5 4.5 V13.5 H0.5 Z" fill="#fff" stroke="#000"/><path d="M7.5 0.5 V4.5 H11.5" fill="none" stroke="#000"/></svg>
<svg class="p" style="left:270px;top:50px" width="17" height="14"><path d="M1 4 H6 L7 3 H12 V12 H1 Z" fill="#E8D848" stroke="#666"/><path d="M3 12 L6 7 H16 L13 12 Z" fill="#F8F0A0" stroke="#666"/><path d="M8 2 L11 0 L14 3" stroke="#2040C0" fill="none"/></svg>
<svg class="p" style="left:295px;top:50px" width="15" height="15"><rect x="0.5" y="0.5" width="14" height="14" fill="#B8B4AC" stroke="#A0A0A0"/><rect x="3" y="1" width="9" height="6" fill="#D4D0C8" stroke="#fff"/><rect x="9" y="10" width="2" height="3" fill="#fff"/></svg>
<svg class="p" style="left:318px;top:48px" width="17" height="17"><rect x="0.5" y="0.5" width="11" height="11" fill="#5A5A20" stroke="#000"/><rect x="2.5" y="1.5" width="7" height="4" fill="#fff"/><rect x="5.5" y="5.5" width="11" height="11" fill="#5A5A20" stroke="#000"/><rect x="7.5" y="6.5" width="7" height="4" fill="#fff"/><rect x="8" y="13" width="5" height="3" fill="#E8D040"/></svg>
<svg class="p" style="left:352px;top:50px" width="17" height="14"><path d="M1 1 L11 8 M1 10 L11 4" stroke="#A0A0A0" stroke-width="1.5"/><circle cx="13" cy="3" r="2.5" fill="none" stroke="#A0A0A0"/><circle cx="13" cy="10" r="2.5" fill="none" stroke="#A0A0A0"/></svg>
<svg class="p" style="left:377px;top:50px" width="15" height="15"><rect x="0.5" y="0.5" width="8" height="10" fill="#D4D0C8" stroke="#A0A0A0"/><rect x="5.5" y="4.5" width="8" height="10" fill="#E4E0D8" stroke="#A0A0A0"/><path d="M7 7 H12 M7 9 H12 M7 11 H12" stroke="#A0A0A0"/></svg>
<svg class="p" style="left:400px;top:48px" width="17" height="17"><rect x="1.5" y="2.5" width="10" height="13" fill="#B89838" stroke="#333"/><rect x="4" y="0.5" width="5" height="3" fill="#666" stroke="#222"/><rect x="6.5" y="7.5" width="9" height="9" fill="#fff" stroke="#000"/><path d="M8 10 H14 M8 12 H14 M8 14 H14" stroke="#2040A0"/></svg>
<svg class="p" style="left:438px;top:50px" width="14" height="13"><path d="M4 4 H8 A4 4 0 0 1 8 12 H5" stroke="#A0A0A0" stroke-width="2.5" fill="none"/><path d="M0 4 L5 0 V8 Z" fill="#A0A0A0"/></svg>
<svg class="p" style="left:462px;top:50px" width="14" height="13"><path d="M10 4 H6 A4 4 0 0 0 6 12 H9" stroke="#A0A0A0" stroke-width="2.5" fill="none"/><path d="M14 4 L9 0 V8 Z" fill="#A0A0A0"/></svg>
<div class="p" style="left:498px;top:46px;width:23px;height:18px;border:1px solid;border-color:#fff #404040 #404040 #fff;border-radius:3px;background:#D4D0C8;box-shadow:inset -1px -1px 0 #808080;"></div>
<svg class="p" style="left:502px;top:49px" width="17" height="13" viewBox="0 0 17 13"><path d="M7 1 L2 6.5 L7 12 M10 1 L15 6.5 L10 12" stroke="#0A2A90" stroke-width="3" fill="none" stroke-linejoin="miter"/><path d="M7 1.5 L2.6 6.5 L7 11.5 M10 1.5 L14.4 6.5 L10 11.5" stroke="#A0C8F8" stroke-width="0.9" fill="none"/></svg>
<div class="p" style="left:525px;top:46px;width:23px;height:18px;border:1px solid;border-color:#404040 #fff #fff #404040;border-radius:3px;background:#fff;box-shadow:inset 1px 1px 0 #808080;"></div>
<svg class="p" style="left:532px;top:48px" width="17" height="7" viewBox="0 0 17 7"><path d="M4 0.5 L1 3.5 L4 6.5 M10 0.5 L13 3.5 L10 6.5" stroke="#0A2A90" stroke-width="2" fill="none"/><path d="M4 1 L1.7 3.5 L4 6" stroke="#A0C8F8" stroke-width="0.6" fill="none"/></svg>
<svg class="p" style="left:530px;top:55px" width="19" height="9" viewBox="0 0 19 9"><rect x="0.5" y="0.5" width="8" height="8" fill="#D8E8F0" stroke="#404040"/><rect x="2" y="2" width="5" height="5" fill="#60A040"/><path d="M10 1.5 H12 M13 1.5 H18 M10 4.5 H12 M13 4.5 H18 M10 7.5 H14 M15 7.5 H18" stroke="#404040"/></svg>
<div class="p" style="left:553px;top:46px;width:23px;height:18px;border:1px solid;border-color:#fff #404040 #404040 #fff;border-radius:3px;background:#D4D0C8;box-shadow:inset -1px -1px 0 #808080;"></div>
<svg class="p" style="left:557px;top:48px" width="17" height="15" viewBox="0 0 17 15"><rect x="0.5" y="0.5" width="9" height="8" fill="#E0F0F8" stroke="#404040"/><rect x="2" y="2" width="6" height="5" fill="#60A040"/><path d="M11 1.5 H13 M14 1.5 H16 M11 4.5 H13 M14 4.5 H16 M11 7.5 H16 M0 10.5 H3 M4 10.5 H9 M10 10.5 H16 M0 13.5 H5 M6 13.5 H11 M12 13.5 H16" stroke="#404040"/></svg>
<svg class="p" style="left:593px;top:47px" width="20" height="18" viewBox="0 0 20 18"><rect x="0.5" y="2.5" width="10" height="7" fill="#E0F0F8" stroke="#404040"/><rect x="2" y="4" width="7" height="4" fill="#60A040"/><path d="M0 11.5 H3 M4 11.5 H9 M0 14.5 H5 M6 14.5 H12 M13 14.5 H19 M12 11.5 H19" stroke="#404040"/><path d="M16 0 L9 8 H13 L8 17 L19 7 H15 L19.5 0 Z" fill="#F8E020" stroke="#403000" stroke-width="0.8"/></svg>
<div class="p t" style="left:628px;top:51px;font-size:11px;">Titolo:</div>
<div class="p sk" style="left:661px;top:47px;width:135px;height:16px;background:#fff;"></div>
<div class="p t" style="left:666px;top:51px;font-size:11px;">Trocco: Corrado Capielo</div>
<div class="p" style="left:222px;top:70px;width:575px;height:1px;background:#000;"></div>
<div class="p" style="left:222px;top:71px;width:575px;height:50px;background:#808080;"></div>
<div class="griph" style="left:226px;top:74px;"></div>
<div class="grip" style="left:225px;top:73px;"></div>
<svg class="p" style="left:234px;top:77px" width="8" height="5"><path d="M0 0 H8 L4 5 Z" fill="#fff"/></svg>
<div class="p t" style="left:246px;top:73px;color:#fff;font-weight:bold;font-size:12px;line-height:14px;">Inserisci</div>
<div class="p t" style="left:351px;top:73px;width:35px;height:14px;background:#C8C4BC;border:1px solid #404040;border-radius:3px 3px 0 0;line-height:14px;font-size:10px;letter-spacing:-0.15px;box-shadow:inset 1px 1px 0 #E8E6E2;"><span style="position:absolute;left:3px;top:1px">Layout</span></div>
<div class="p t" style="left:387px;top:73px;width:31px;height:14px;background:#C8C4BC;border:1px solid #404040;border-radius:3px 3px 0 0;line-height:14px;font-size:10px;letter-spacing:-0.15px;box-shadow:inset 1px 1px 0 #E8E6E2;"><span style="position:absolute;left:3px;top:1px">Testo</span></div>
<div class="p t" style="left:419px;top:73px;width:36px;height:14px;background:#C8C4BC;border:1px solid #404040;border-radius:3px 3px 0 0;line-height:14px;font-size:10px;letter-spacing:-0.15px;box-shadow:inset 1px 1px 0 #E8E6E2;"><span style="position:absolute;left:3px;top:1px">Tabelle</span></div>
<div class="p t" style="left:456px;top:73px;width:33px;height:14px;background:#C8C4BC;border:1px solid #404040;border-radius:3px 3px 0 0;line-height:14px;font-size:10px;letter-spacing:-0.15px;box-shadow:inset 1px 1px 0 #E8E6E2;"><span style="position:absolute;left:3px;top:1px">Frame</span></div>
<div class="p t" style="left:490px;top:73px;width:35px;height:14px;background:#C8C4BC;border:1px solid #404040;border-radius:3px 3px 0 0;line-height:14px;font-size:10px;letter-spacing:-0.15px;box-shadow:inset 1px 1px 0 #E8E6E2;"><span style="position:absolute;left:3px;top:1px">Moduli</span></div>
<div class="p t" style="left:526px;top:73px;width:37px;height:14px;background:#C8C4BC;border:1px solid #404040;border-radius:3px 3px 0 0;line-height:14px;font-size:10px;letter-spacing:-0.15px;box-shadow:inset 1px 1px 0 #E8E6E2;"><span style="position:absolute;left:3px;top:1px">Modelli</span></div>
<div class="p t" style="left:564px;top:73px;width:41px;height:14px;background:#C8C4BC;border:1px solid #404040;border-radius:3px 3px 0 0;line-height:14px;font-size:10px;letter-spacing:-0.15px;box-shadow:inset 1px 1px 0 #E8E6E2;"><span style="position:absolute;left:3px;top:1px">Caratteri</span></div>
<div class="p t" style="left:606px;top:73px;width:33px;height:14px;background:#C8C4BC;border:1px solid #404040;border-radius:3px 3px 0 0;line-height:14px;font-size:10px;letter-spacing:-0.15px;box-shadow:inset 1px 1px 0 #E8E6E2;"><span style="position:absolute;left:3px;top:1px">Media</span></div>
<div class="p t" style="left:640px;top:73px;width:28px;height:14px;background:#C8C4BC;border:1px solid #404040;border-radius:3px 3px 0 0;line-height:14px;font-size:10px;letter-spacing:-0.15px;box-shadow:inset 1px 1px 0 #E8E6E2;"><span style="position:absolute;left:3px;top:1px">Head</span></div>
<div class="p t" style="left:669px;top:73px;width:30px;height:14px;background:#C8C4BC;border:1px solid #404040;border-radius:3px 3px 0 0;line-height:14px;font-size:10px;letter-spacing:-0.15px;box-shadow:inset 1px 1px 0 #E8E6E2;"><span style="position:absolute;left:3px;top:1px">Script</span></div>
<div class="p t" style="left:700px;top:73px;width:59px;height:14px;background:#C8C4BC;border:1px solid #404040;border-radius:3px 3px 0 0;line-height:14px;font-size:10px;letter-spacing:-0.15px;box-shadow:inset 1px 1px 0 #E8E6E2;"><span style="position:absolute;left:3px;top:1px">Applicazione</span></div>
<div class="p t" style="left:312px;top:73px;width:38px;height:17px;background:#D4D0C8;border:1px solid #404040;border-bottom:none;border-radius:3px 3px 0 0;font-size:10px;box-shadow:inset 1px 1px 0 #fff;"><span style="position:absolute;left:3px;top:2px">Comuni</span></div>
<svg class="p" style="left:781px;top:75px" width="13" height="11"><path d="M0 0 H2 V2 H0 Z M0 3 H2 V5 H0 Z M0 6 H2 V8 H0 Z M3 1 H9 V2 H3 Z M3 4 H9 V5 H3 Z M3 7 H6 V8 H3 Z M7 7 H12 L9.5 10 Z" fill="#fff"/></svg>
<div class="p" style="left:223px;top:89px;width:572px;height:31px;background:#D4D0C8;border-radius:2px;"></div>
<div class="p" style="left:306px;top:96px;width:1px;height:22px;background:#808080;"></div>
<div class="p" style="left:307px;top:96px;width:1px;height:22px;background:#fff;"></div>
<div class="p" style="left:365px;top:96px;width:1px;height:22px;background:#808080;"></div>
<div class="p" style="left:366px;top:96px;width:1px;height:22px;background:#fff;"></div>
<div class="p" style="left:533px;top:96px;width:1px;height:22px;background:#808080;"></div>
<div class="p" style="left:534px;top:96px;width:1px;height:22px;background:#fff;"></div>
<div class="p" style="left:619px;top:96px;width:1px;height:22px;background:#808080;"></div>
<div class="p" style="left:620px;top:96px;width:1px;height:22px;background:#fff;"></div>
<svg class="p" style="left:229px;top:97px" width="19" height="19" viewBox="0 0 19 19"><g transform="rotate(-45 9.5 9.5)"><rect x="6" y="-1" width="7" height="11" rx="3.5" fill="none" stroke="#203A70" stroke-width="2.6"/><rect x="6" y="9" width="7" height="11" rx="3.5" fill="none" stroke="#203A70" stroke-width="2.6"/><rect x="6" y="-1" width="7" height="11" rx="3.5" fill="none" stroke="#90C0F0" stroke-width="0.9"/><rect x="6" y="9" width="7" height="11" rx="3.5" fill="none" stroke="#90C0F0" stroke-width="0.9"/></g></svg>
<svg class="p" style="left:256px;top:100px" width="19" height="12" viewBox="0 0 19 12"><rect x="0.5" y="0.5" width="17" height="11" fill="#FFFBE0" stroke="#404040"/><path d="M1 11.5 H18.5 V1" stroke="#202020" fill="none"/><path d="M3 3.5 H8 M3 5.5 H10 M3 7.5 H9" stroke="#808080"/><rect x="12" y="2" width="4" height="4" fill="#E04020"/><rect x="14" y="2" width="2" height="2" fill="#2060D0"/></svg>
<svg class="p" style="left:283px;top:97px" width="18" height="17" viewBox="0 0 18 17"><circle cx="9" cy="2.5" r="2" fill="none" stroke="#806010" stroke-width="1.6"/><path d="M9 4.5 V15 M5 7 H13" stroke="#C8A020" stroke-width="2.2"/><path d="M1.5 9 Q2 15 9 15.5 Q16 15 16.5 9" stroke="#C8A020" stroke-width="2.2" fill="none"/><path d="M0 9 L2 7 L3.5 10 Z M18 9 L16 7 L14.5 10 Z" fill="#A08010"/><path d="M9.7 5 V14" stroke="#F8E890" stroke-width="0.8"/></svg>
<svg class="p" style="left:315px;top:97px" width="17" height="16" viewBox="0 0 17 16"><rect x="0.5" y="0.5" width="16" height="15" fill="#FFFBE0" stroke="#505030"/><path d="M16.5 1 V15.5 H1" stroke="#202010" fill="none"/><rect x="2" y="2.5" width="6" height="2" fill="#8A8A20"/><rect x="9" y="2.5" width="6" height="2" fill="#8A8A20"/><rect x="2" y="6.5" width="6" height="2" fill="#8A8A20"/><rect x="9" y="6.5" width="6" height="2" fill="#8A8A20"/><rect x="2" y="10.5" width="6" height="2" fill="#8A8A20"/><rect x="9" y="10.5" width="6" height="2" fill="#8A8A20"/></svg>
<svg class="p" style="left:342px;top:97px" width="18" height="17" viewBox="0 0 18 17"><rect x="2.5" y="2.5" width="13" height="12" fill="#FFFFF0" stroke="#303030" stroke-dasharray="1 1"/><rect x="1" y="1" width="3" height="3" fill="#000"/><rect x="14" y="1" width="3" height="3" fill="#000"/><rect x="1" y="13" width="3" height="3" fill="#000"/><rect x="14" y="13" width="3" height="3" fill="#000"/><rect x="7" y="0" width="3" height="3" fill="#000"/><path d="M5 5.5 H12 M5 7.5 H10 M5 9.5 H9" stroke="#505050"/><rect x="10" y="9" width="4" height="3" fill="#40A030"/></svg>
<svg class="p" style="left:374px;top:96px" width="17" height="17"><rect x="0.5" y="0.5" width="16" height="16" fill="#fff" stroke="#333"/><rect x="2" y="2" width="13" height="13" fill="#9AD0F0"/><circle cx="8" cy="7" r="4" fill="#40A030"/><rect x="7" y="9" width="2" height="5" fill="#805020"/><rect x="2" y="12" width="13" height="3" fill="#70B040"/></svg>
<svg class="p" style="left:401px;top:96px" width="18" height="18"><rect x="0.5" y="0.5" width="10" height="9" fill="#fff" stroke="#333"/><rect x="2" y="2" width="7" height="6" fill="#40A030"/><rect x="7.5" y="8.5" width="10" height="9" fill="#fff" stroke="#333"/><path d="M9 10 L16 16 M16 10 L9 16" stroke="#555"/></svg>
<svg class="p" style="left:428px;top:96px" width="18" height="18"><circle cx="9" cy="9" r="8.5" fill="#F0C020" stroke="#806000"/><circle cx="8" cy="8" r="5" fill="#F8E060"/><text x="2.5" y="13" font-family="Liberation Serif" font-style="italic" font-weight="bold" font-size="11" fill="#1A2A60">fw</text></svg>
<svg class="p" style="left:455px;top:96px" width="18" height="18"><circle cx="9" cy="9" r="8.5" fill="#D02010" stroke="#600"/><circle cx="8" cy="7" r="4" fill="#F05030"/><path d="M13 4 Q9 3.5 8.5 9 Q8 14 4.5 14 M6.5 8.5 H11" stroke="#2A2040" stroke-width="2" fill="none"/></svg>
<svg class="p" style="left:482px;top:96px" width="18" height="18"><path d="M1 1 L17 17 M17 1 L1 17" stroke="#555" stroke-width="1"/><rect x="3.5" y="4.5" width="11" height="9" fill="#E8F0E0" stroke="#444"/><path d="M5 7 H13 M5 10 H11" stroke="#3A8A30" stroke-width="1.5"/></svg>
<svg class="p" style="left:509px;top:97px" width="18" height="16"><path d="M0 2 H9 M0 6 H13 M0 10 H9" stroke="#2870B8" stroke-width="2.5"/><path d="M12 9 L17 12 L12 15 Z" fill="#333"/><path d="M0 13 H10" stroke="#444" stroke-width="1.5"/></svg>
<svg class="p" style="left:540px;top:98px" width="18" height="14"><path d="M0 2 H18 M0 11 H18" stroke="#888" stroke-dasharray="1 1"/><path d="M0 6.5 H18" stroke="#1A3A80" stroke-width="2"/></svg>
<svg class="p" style="left:568px;top:96px" width="16" height="18"><rect x="0.5" y="1.5" width="15" height="16" fill="#FFF8E8" stroke="#806030"/><rect x="1" y="2" width="14" height="3" fill="#C8A050"/><text x="3" y="15" font-family="Liberation Sans" font-size="9" fill="#C02020">19</text></svg>
<svg class="p" style="left:594px;top:96px" width="18" height="18"><rect x="0.5" y="0.5" width="13" height="12" fill="#fff" stroke="#333"/><rect x="2" y="2" width="9" height="8" fill="#40A030"/><rect x="8.5" y="8.5" width="9" height="9" fill="#fff" stroke="#333"/><path d="M10 11 H16 M10 14 H16" stroke="#555"/></svg>
<svg class="p" style="left:626px;top:96px" width="18" height="17"><path d="M2 1 H16 Q17.5 1 17.5 3 V10 Q17.5 12 16 12 H8 L4 16 V12 H2 Q0.5 12 0.5 10 V3 Q0.5 1 2 1 Z" fill="#fff" stroke="#333"/><path d="M4 4 V8 M7 6.5 H9 M11 6.5 H13" stroke="#1A3A80" stroke-width="1.6"/></svg>
<svg class="p" style="left:652px;top:96px" width="18" height="18"><rect x="4.5" y="0.5" width="13" height="14" fill="#fff" stroke="#333"/><path d="M7 4 H15 M7 7 H15 M7 10 H15" stroke="#555"/><path d="M4 11 L1 14 L4 17 M8 11 L11 14 L8 17" stroke="#1A3A80" stroke-width="1.5" fill="none"/></svg>
<div class="p" style="left:221px;top:122px;width:575px;height:1px;background:#808080;"></div>
<div class="p" style="left:222px;top:123px;width:573px;height:1px;background:#000;"></div>
<div class="p" style="left:222px;top:123px;width:1px;height:252px;background:#000;"></div>
<div class="p" style="left:223px;top:124px;width:26px;height:235px;background:#0A246A;"></div>
<div class="p" style="left:249px;top:124px;width:530px;height:235px;background:#fff;"></div>
<div class="p" style="left:249px;top:124px;width:530px;height:235px;overflow:hidden;">
<div class="p mono t" style="left:4px;top:3px;line-height:14px;font-size:12.5px;transform:scaleX(0.9333);transform-origin:0 0;"><span style="color:#00C">&lt;!DOCTYPE HTML PUBLIC "-//W3C//DTD HTML 4.01 Transitional//EN"&gt;</span></div>
<div class="p mono t" style="left:4px;top:21px;line-height:14px;font-size:12.5px;transform:scaleX(0.9333);transform-origin:0 0;"><span style="color:#000080">&lt;html&gt;</span></div>
<div class="p mono t" style="left:4px;top:39px;line-height:14px;font-size:12.5px;transform:scaleX(0.9333);transform-origin:0 0;"><span style="color:#000080">&lt;head&gt;</span></div>
<div class="p mono t" style="left:4px;top:57px;line-height:14px;font-size:12.5px;transform:scaleX(0.9333);transform-origin:0 0;"><span style="color:#000080">&lt;meta http-equiv=</span><span style="color:#00C">"Content-Type"</span><span style="color:#000080"> content=</span><span style="color:#00C">"text/html; charset=iso-8859-1"</span><span style="color:#000080">&gt;</span></div>
<div class="p mono t" style="left:4px;top:75px;line-height:14px;font-size:12.5px;transform:scaleX(0.9333);transform-origin:0 0;"><span style="color:#000080">&lt;title&gt;</span>Trocco: Corrado Capielo<span style="color:#000080">&lt;/title&gt;</span></div>
<div class="p mono t" style="left:4px;top:93px;line-height:14px;font-size:12.5px;transform:scaleX(0.9333);transform-origin:0 0;"><span style="color:#900">&lt;script language=</span><i>"JavaScript"</i><span style="color:#900"> fptype=</span><i>"dynamicanimation"</i><span style="color:#900">&gt;</span></div>
<div class="p mono t" style="left:4px;top:111px;line-height:14px;font-size:12.5px;transform:scaleX(0.9333);transform-origin:0 0;"><i style="color:#999">&lt;!--</i></div>
<div class="p mono t" style="left:4px;top:129px;line-height:14px;font-size:12.5px;transform:scaleX(0.9333);transform-origin:0 0;"><b>function</b> dynAnimation<b style="color:#000080">()</b> <b style="color:#000080">{}</b></div>
<div class="p mono t" style="left:4px;top:147px;line-height:14px;font-size:12.5px;transform:scaleX(0.9333);transform-origin:0 0;"><b>function</b> clickSwapImg<b style="color:#000080">()</b> <b style="color:#000080">{}</b></div>
<div class="p mono t" style="left:4px;top:165px;line-height:14px;font-size:12.5px;transform:scaleX(0.9333);transform-origin:0 0;"><i style="color:#999">//--&gt;</i></div>
<div class="p mono t" style="left:4px;top:183px;line-height:14px;font-size:12.5px;transform:scaleX(0.9333);transform-origin:0 0;"><span style="color:#900">&lt;/script&gt;</span></div>
<div class="p mono t" style="left:4px;top:201px;line-height:14px;font-size:12.5px;transform:scaleX(0.9333);transform-origin:0 0;"><span style="color:#900">&lt;script language=</span><i>"JavaScript1.2"</i><span style="color:#900"> fptype=</span><i>"dynamicanimation"</i><span style="color:#900"> src=</span><i>"../../layout/...</i></div>
<div class="p mono t" style="left:4px;top:219px;line-height:14px;font-size:12.5px;transform:scaleX(0.9333);transform-origin:0 0;"><span style="color:#900">&lt;/script&gt;</span></div>
</div>
<div class="p mono t" style="left:222px;top:127px;width:23px;text-align:right;color:#fff;line-height:14px;font-size:12.5px;transform:scaleX(0.9333);transform-origin:100% 0;">1</div>
<div class="p mono t" style="left:222px;top:145px;width:23px;text-align:right;color:#fff;line-height:14px;font-size:12.5px;transform:scaleX(0.9333);transform-origin:100% 0;">2</div>
<div class="p mono t" style="left:222px;top:163px;width:23px;text-align:right;color:#fff;line-height:14px;font-size:12.5px;transform:scaleX(0.9333);transform-origin:100% 0;">3</div>
<div class="p mono t" style="left:222px;top:181px;width:23px;text-align:right;color:#fff;line-height:14px;font-size:12.5px;transform:scaleX(0.9333);transform-origin:100% 0;">4</div>
<div class="p mono t" style="left:222px;top:199px;width:23px;text-align:right;color:#fff;line-height:14px;font-size:12.5px;transform:scaleX(0.9333);transform-origin:100% 0;">5</div>
<div class="p mono t" style="left:222px;top:217px;width:23px;text-align:right;color:#fff;line-height:14px;font-size:12.5px;transform:scaleX(0.9333);transform-origin:100% 0;">6</div>
<div class="p mono t" style="left:222px;top:235px;width:23px;text-align:right;color:#fff;line-height:14px;font-size:12.5px;transform:scaleX(0.9333);transform-origin:100% 0;">7</div>
<div class="p mono t" style="left:222px;top:253px;width:23px;text-align:right;color:#fff;line-height:14px;font-size:12.5px;transform:scaleX(0.9333);transform-origin:100% 0;">8</div>
<div class="p mono t" style="left:222px;top:271px;width:23px;text-align:right;color:#fff;line-height:14px;font-size:12.5px;transform:scaleX(0.9333);transform-origin:100% 0;">9</div>
<div class="p mono t" style="left:222px;top:289px;width:23px;text-align:right;color:#fff;line-height:14px;font-size:12.5px;transform:scaleX(0.9333);transform-origin:100% 0;">10</div>
<div class="p mono t" style="left:222px;top:307px;width:23px;text-align:right;color:#fff;line-height:14px;font-size:12.5px;transform:scaleX(0.9333);transform-origin:100% 0;">11</div>
<div class="p mono t" style="left:222px;top:325px;width:23px;text-align:right;color:#fff;line-height:14px;font-size:12.5px;transform:scaleX(0.9333);transform-origin:100% 0;">12</div>
<div class="p mono t" style="left:222px;top:343px;width:23px;text-align:right;color:#fff;line-height:14px;font-size:12.5px;transform:scaleX(0.9333);transform-origin:100% 0;">13</div>
<div class="p" style="left:779px;top:124px;width:16px;height:235px;background:repeating-conic-gradient(#D4D0C8 0 25%,#fff 0 50%) 0 0/2px 2px;"></div>
<div class="p sb" style="left:779px;top:124px;width:14px;height:14px;"></div>
<svg class="p" style="left:783px;top:130px" width="7" height="4"><path d="M0 4 H7 L3.5 0 Z" fill="#000"/></svg>
<div class="p sb" style="left:779px;top:343px;width:14px;height:14px;"></div>
<svg class="p" style="left:783px;top:349px" width="7" height="4"><path d="M0 0 H7 L3.5 4 Z" fill="#000"/></svg>
<div class="p sb" style="left:779px;top:140px;width:14px;height:28px;"></div>
<div class="p" style="left:223px;top:359px;width:556px;height:16px;background:repeating-conic-gradient(#D4D0C8 0 25%,#fff 0 50%) 0 0/2px 2px;"></div>
<div class="p sb" style="left:223px;top:359px;width:14px;height:14px;"></div>
<svg class="p" style="left:229px;top:363px" width="4" height="7"><path d="M4 0 V7 L0 3.5 Z" fill="#000"/></svg>
<div class="p sb" style="left:763px;top:359px;width:14px;height:14px;"></div>
<svg class="p" style="left:769px;top:363px" width="4" height="7"><path d="M0 0 V7 L4 3.5 Z" fill="#000"/></svg>
<div class="p sb" style="left:239px;top:359px;width:10px;height:14px;"></div>
<div class="p" style="left:779px;top:359px;width:16px;height:16px;background:#D4D0C8;"></div>
<div class="p" style="left:221px;top:375px;width:576px;height:1px;background:#fff;"></div>
<div class="p" style="left:795px;top:123px;width:1px;height:252px;background:#D4D0C8;"></div>
<div class="p" style="left:796px;top:122px;width:1px;height:254px;background:#fff;"></div>
<div class="p" style="left:221px;top:380px;width:576px;height:1px;background:#808080;"></div>
<div class="p" style="left:222px;top:381px;width:574px;height:1px;background:#000;"></div>
<div class="p" style="left:222px;top:381px;width:1px;height:147px;background:#000;"></div>
<div class="p" style="left:223px;top:382px;width:556px;height:130px;background:#fff;"></div>
<div class="p" style="left:223px;top:382px;width:556px;height:130px;overflow:hidden;">
<div class="p" style="left:11px;top:11px;width:600px;height:1px;background-image:linear-gradient(to right,#000 1px,transparent 1px);background-size:4px 1px;"></div>
<div class="p" style="left:8px;top:12px;width:1px;height:200px;background-image:linear-gradient(#000 1px,transparent 1px);background-size:1px 4px;"></div>
<div class="p" style="left:134px;top:12px;width:1px;height:200px;background-image:linear-gradient(#000 1px,transparent 1px);background-size:1px 4px;"></div>
<svg class="p" style="left:64px;top:14px" width="16" height="15"><path d="M0 2 H16 V12 L8 15 L0 12 Z" fill="#E8E020" stroke="#A09000"/><path d="M8 3 V11 M5 8 Q8 12 11 8" stroke="#605000" stroke-width="1.2" fill="none"/><circle cx="8" cy="3" r="1.2" fill="#605000"/></svg>
<div class="p" style="left:40px;top:58px;width:64px;height:64px;border-radius:50%;background:radial-gradient(circle,#fff 0 22px,#D8A0A8 23px,#F0D0D4 27px,#fff 32px);"></div>
<svg class="p" style="left:53px;top:70px" width="38" height="40"><defs><radialGradient id="arg" cx="0.5" cy="0.35" r="0.7"><stop offset="0" stop-color="#F0D8DC"/><stop offset="1" stop-color="#C87880"/></radialGradient></defs><path d="M19 2 L32 16 H24 V37 H14 V16 H6 Z" fill="url(#arg)" stroke="#B87078" stroke-width="0.8"/></svg>
<div class="p t" style="left:39px;top:123px;color:#8A0A0A;font-weight:bold;font-size:16px;letter-spacing:5.5px;-webkit-text-stroke:0.5px #8A0A0A;">risali</div>
<div class="p" style="left:148px;top:27px;width:81px;height:88px;background:#fff;box-shadow:-3px 4px 8px 1px rgba(0,0,0,0.55);"></div>
<div class="p" style="left:255px;top:61px;width:121px;height:54px;background:#fff;box-shadow:-3px 4px 8px 1px rgba(0,0,0,0.55);"></div>
<div class="p" style="left:375px;top:68px;width:190px;height:38px;background:#fff;box-shadow:-2px -3px 6px 1px rgba(0,0,0,0.45);"></div>
<div class="p" style="left:441px;top:68px;width:130px;height:56px;background:#fff;box-shadow:-3px 4px 6px 1px rgba(0,0,0,0.5);"></div>
<div class="p" style="left:225px;top:67px;width:40px;height:39px;background:#fff;"></div>
<div class="p" style="left:148px;top:27px;width:81px;height:88px;background:#fff;"></div>
<div class="p" style="left:255px;top:61px;width:121px;height:54px;background:#fff;"></div>
<div class="p" style="left:375px;top:68px;width:190px;height:38px;background:#fff;"></div>
<svg class="p" style="left:166px;top:37px" width="45" height="71" viewBox="0 0 45 71"><defs><filter id="bark" x="0" y="0" width="100%" height="100%"><feTurbulence type="fractalNoise" baseFrequency="0.35 0.12" numOctaves="3" seed="4"/><feColorMatrix type="matrix" values="0 0 0 0 0.22  0 0 0 0 0.16  0 0 0 0 0.12  0 0 0 -2.5 1.7"/><feComposite in2="SourceGraphic" operator="in"/></filter><linearGradient id="st" x1="0" x2="1"><stop offset="0" stop-color="#5A4636"/><stop offset="0.45" stop-color="#806A58"/><stop offset="1" stop-color="#3E3026"/></linearGradient></defs><path d="M1 13 Q2 40 5 62 Q20 73 36 66 Q42 40 43 12 Z" fill="url(#st)"/><path d="M1 13 Q2 40 5 62 Q20 73 36 66 Q42 40 43 12 Z" fill="#000" filter="url(#bark)" opacity="0.9"/><ellipse cx="22" cy="13" rx="21" ry="12" fill="#A86A50"/><ellipse cx="22" cy="13" rx="21" ry="12" fill="none" stroke="#8A5040" stroke-width="1"/><ellipse cx="21" cy="13" rx="15" ry="8.5" fill="#5A3C2C"/><path d="M8 12 Q20 2 34 11" stroke="#3A2418" stroke-width="2" fill="none" opacity="0.6"/></svg>
<div class="p t" style="left:244px;top:35px;font-weight:bold;font-size:18px;letter-spacing:7.6px;-webkit-text-stroke:0.4px #000;">l'Universo al quadrato</div>
<div class="p t" style="left:258px;top:66px;font-weight:bold;font-size:35px;line-height:40px;letter-spacing:-0.4px;-webkit-text-stroke:0.6px #000;">Trocco</div>
<div class="p t" style="left:440px;top:72px;color:#7A0A0A;font-weight:bold;font-size:26px;line-height:30px;letter-spacing:6.8px;-webkit-text-stroke:0.4px #7A0A0A;">Capielo</div>
<div class="p t" style="left:447px;top:109px;color:#7A0A0A;font-weight:bold;font-size:12px;letter-spacing:-0.5px;">click qui per la home</div>
</div>
<div class="p" style="left:779px;top:382px;width:16px;height:130px;background:repeating-conic-gradient(#D4D0C8 0 25%,#fff 0 50%) 0 0/2px 2px;"></div>
<div class="p sb" style="left:779px;top:382px;width:14px;height:14px;"></div>
<svg class="p" style="left:783px;top:388px" width="7" height="4"><path d="M0 4 H7 L3.5 0 Z" fill="#000"/></svg>
<div class="p sb" style="left:779px;top:496px;width:14px;height:14px;"></div>
<svg class="p" style="left:783px;top:502px" width="7" height="4"><path d="M0 0 H7 L3.5 4 Z" fill="#000"/></svg>
<div class="p sb" style="left:779px;top:397px;width:14px;height:10px;"></div>
<div class="p" style="left:223px;top:512px;width:556px;height:16px;background:repeating-conic-gradient(#D4D0C8 0 25%,#fff 0 50%) 0 0/2px 2px;"></div>
<div class="p sb" style="left:223px;top:512px;width:14px;height:14px;"></div>
<svg class="p" style="left:229px;top:516px" width="4" height="7"><path d="M4 0 V7 L0 3.5 Z" fill="#000"/></svg>
<div class="p sb" style="left:763px;top:512px;width:14px;height:14px;"></div>
<svg class="p" style="left:769px;top:516px" width="4" height="7"><path d="M0 0 V7 L4 3.5 Z" fill="#000"/></svg>
<div class="p sb" style="left:239px;top:512px;width:465px;height:14px;"></div>
<div class="p" style="left:779px;top:512px;width:16px;height:16px;background:#D4D0C8;"></div>
<div class="p" style="left:221px;top:528px;width:576px;height:1px;background:#fff;"></div>
<div class="p" style="left:795px;top:381px;width:1px;height:147px;background:#D4D0C8;"></div>
<div class="p" style="left:796px;top:380px;width:1px;height:148px;background:#fff;"></div>
<div class="p" style="left:222px;top:528px;width:575px;height:1px;background:#000;"></div>
<div class="p t" style="left:225px;top:528px;width:47px;height:17px;background:#fff;border:1px solid #404040;border-top:none;border-radius:0 0 4px 4px;font-size:10px;line-height:16px;"><span style="position:absolute;left:4px;top:2px;letter-spacing:-0.5px">index.htm</span></div>
<div class="p t" style="left:223px;top:553px;font-size:10px;letter-spacing:-0.6px;">&lt;body&gt; &lt;div&gt;</div>
<div class="p sk" style="left:671px;top:550px;width:47px;height:14px;background:#D4D0C8;box-shadow:none;border-color:#808080 #fff #fff #808080;"></div>
<div class="p t" style="left:674px;top:552px;font-size:10px;letter-spacing:-0.6px;word-spacing:-0.8px;">572 x 146</div>
<svg class="p" style="left:713px;top:558px" width="5" height="3"><path d="M0 0 H5 L2.5 3 Z" fill="#000"/></svg>
<div class="p sk" style="left:721px;top:550px;width:58px;height:14px;background:#D4D0C8;box-shadow:none;border-color:#808080 #fff #fff #808080;"></div>
<div class="p t" style="left:725px;top:552px;font-size:10px;letter-spacing:-0.5px;word-spacing:-0.3px;">183K / 27 sec</div>
<div class="p" style="left:222px;top:566px;width:575px;height:1px;background:#000;"></div>
<div class="p" style="left:222px;top:567px;width:575px;height:107px;background:#808080;"></div>
<div class="griph" style="left:226px;top:570px;"></div>
<div class="grip" style="left:225px;top:569px;"></div>
<svg class="p" style="left:234px;top:574px" width="8" height="5"><path d="M0 0 H8 L4 5 Z" fill="#fff"/></svg>
<div class="p t" style="left:246px;top:569px;color:#fff;font-weight:bold;font-size:12px;line-height:14px;">Propriet&agrave;</div>
<svg class="p" style="left:781px;top:571px" width="13" height="11"><path d="M0 0 H2 V2 H0 Z M0 3 H2 V5 H0 Z M0 6 H2 V8 H0 Z M3 1 H9 V2 H3 Z M3 4 H9 V5 H3 Z M3 7 H6 V8 H3 Z M7 7 H12 L9.5 10 Z" fill="#fff"/></svg>
<div class="p" style="left:223px;top:586px;width:572px;height:87px;background:#D4D0C8;border-radius:5px 5px 0 0;"></div>
<div class="p" style="left:223px;top:627px;width:572px;height:1px;background:#808080;"></div>
<div class="p" style="left:223px;top:628px;width:572px;height:1px;background:#fff;"></div>
<div class="p t" style="left:230px;top:591px;font-size:10.5px;letter-spacing:-0.3px;"><u>F</u>ormato</div>
<div class="p t" style="left:227px;top:609px;font-size:10.5px;letter-spacing:-0.5px;"><u>C</u>ollegam</div>
<div class="p sk" style="left:271px;top:588px;width:80px;height:15px;background:#fff;"></div>
<div class="p t" style="left:273px;top:590px;width:62px;height:13px;overflow:hidden;font-size:10.5px;"><span style="position:absolute;left:2px;top:1px;">Nessuno</span></div>
<div class="p sb" style="left:335px;top:590px;width:14px;height:11px;"></div>
<svg class="p" style="left:340px;top:595px" width="7" height="4"><path d="M0 0 H7 L3.5 4 Z" fill="#000"/></svg>
<svg class="p" style="left:358px;top:590px" width="15" height="15"><defs><radialGradient id="cssb" cx="0.35" cy="0.3" r="0.8"><stop offset="0" stop-color="#E0F0FF"/><stop offset="0.5" stop-color="#6A9AD0"/><stop offset="1" stop-color="#1A3A70"/></radialGradient></defs><circle cx="7.5" cy="7.5" r="7" fill="url(#cssb)" stroke="#203050" stroke-width="0.8"/><path d="M9.5 2.5 Q5 3 5.5 6 Q6 8 9 8.5 Q11 10.5 7 12.5" stroke="#fff" stroke-width="1.8" fill="none"/><path d="M9.5 2.5 Q5 3 5.5 6 Q6 8 9 8.5 Q11 10.5 7 12.5" stroke="#102040" stroke-width="0.6" fill="none"/></svg>
<div class="p sk" style="left:377px;top:589px;width:95px;height:15px;background:#fff;"></div>
<div class="p t" style="left:379px;top:591px;width:77px;height:13px;overflow:hidden;font-size:10.5px;"><span style="position:absolute;left:2px;top:1px;"><span style="letter-spacing:-0.3px">Nessuno stile CSS</span></span></div>
<div class="p sb" style="left:456px;top:591px;width:14px;height:11px;"></div>
<svg class="p" style="left:461px;top:596px" width="7" height="4"><path d="M0 0 H7 L3.5 4 Z" fill="#000"/></svg>
<div class="p sk" style="left:271px;top:608px;width:201px;height:15px;background:#fff;"></div>
<div class="p sb" style="left:456px;top:610px;width:14px;height:11px;"></div>
<svg class="p" style="left:461px;top:615px" width="7" height="4"><path d="M0 0 H7 L3.5 4 Z" fill="#000"/></svg>
<div class="p sk" style="left:478px;top:589px;width:226px;height:13px;background:#D4D0C8;"></div>
<div class="p rb" style="left:710px;top:589px;width:15px;height:14px;"></div>
<div class="p t" style="left:714px;top:590px;font-family:Liberation Serif,serif;font-weight:bold;font-size:14px;">B</div>
<div class="p rb" style="left:728px;top:589px;width:15px;height:14px;"></div>
<div class="p t" style="left:732px;top:590px;font-family:Liberation Serif,serif;font-weight:bold;font-style:italic;font-size:14px;">I</div>
<svg class="p" style="left:480px;top:610px" width="15" height="15"><circle cx="7.5" cy="7.5" r="6" fill="none" stroke="#222" stroke-width="1.2"/><path d="M7.5 0 V15 M0 7.5 H15" stroke="#222"/><circle cx="7.5" cy="7.5" r="2" fill="#fff" stroke="#222"/></svg>
<svg class="p" style="left:495px;top:610px" width="18" height="14"><path d="M1 3 H6 L7 2 H12 V4 H16 V13 H1 Z" fill="#F0C848" stroke="#A07010"/></svg>
<div class="p t" style="left:530px;top:611px;font-size:10.5px;">D<u>e</u>st</div>
<div class="p sk" style="left:556px;top:607px;width:71px;height:16px;background:#D4D0C8;"></div>
<div class="p sb" style="left:611px;top:609px;width:14px;height:12px;"></div>
<svg class="p" style="left:616px;top:614px" width="7" height="4"><path d="M0 0 H7 L3.5 4 Z" fill="#999"/></svg>
<div class="p" style="left:633px;top:607px;width:15px;height:16px;background:#D4D0C8;border:1px solid;border-color:#fff #404040 #404040 #fff;"></div>
<div class="p" style="left:651px;top:607px;width:15px;height:16px;background:#D4D0C8;border:1px solid;border-color:#fff #404040 #404040 #fff;"></div>
<div class="p" style="left:672px;top:607px;width:15px;height:16px;background:#D4D0C8;border:1px solid;border-color:#fff #404040 #404040 #fff;"></div>
<div class="p" style="left:690px;top:607px;width:15px;height:16px;background:#D4D0C8;border:1px solid;border-color:#fff #404040 #404040 #fff;"></div>
<svg class="p" style="left:636px;top:610px" width="12" height="12"><rect x="0" y="0" width="3" height="3" fill="#1A3A90"/><rect x="0" y="4.5" width="3" height="3" fill="#1A3A90"/><rect x="0" y="9" width="3" height="3" fill="#1A3A90"/><path d="M4 1.5 H12 M4 6 H12 M4 10.5 H12" stroke="#000"/></svg>
<svg class="p" style="left:654px;top:610px" width="12" height="12"><text x="0" y="4" font-size="5" fill="#1A3A90">1</text><text x="0" y="12" font-size="5" fill="#1A3A90">3</text><path d="M4 1.5 H12 M4 6 H12 M4 10.5 H12" stroke="#000"/></svg>
<svg class="p" style="left:675px;top:610px" width="12" height="12"><path d="M0 0.5 H12 M6 3.5 H12 M6 6.5 H12 M0 11.5 H12" stroke="#000"/><path d="M0 5 L4 2 V8 Z" fill="#1A3A90"/></svg>
<svg class="p" style="left:693px;top:610px" width="12" height="12"><path d="M0 0.5 H12 M6 3.5 H12 M6 6.5 H12 M0 11.5 H12" stroke="#000"/><path d="M5 5 L1 2 V8 Z" fill="#1A3A90"/></svg>
<div class="p t" style="left:633px;top:632px;width:67px;height:14px;border:1px solid;border-color:#fff #404040 #404040 #fff;border-radius:3px;text-align:center;color:#808080;text-shadow:1px 1px 0 #fff;line-height:14px;font-size:10px;box-shadow:inset -1px -1px 0 #808080;"><u>V</u>oce elenco...</div>
<svg class="p" style="left:781px;top:587px" width="14" height="14"><circle cx="7" cy="7" r="6" fill="#fff" stroke="#000" stroke-width="1.3"/><text x="4" y="11" font-size="10" font-weight="bold" font-family="Liberation Sans">?</text></svg>
<svg class="p" style="left:780px;top:602px" width="14" height="13"><rect x="0.5" y="3.5" width="9" height="9" fill="#fff" stroke="#000"/><path d="M4 10 L12 2 L13.5 3.5 L5.5 11.5 Z" fill="#F0C020" stroke="#000"/></svg>
<div class="p" style="left:780px;top:662px;width:15px;height:11px;background:#808080;"></div>
<div class="p" style="left:781px;top:663px;width:13px;height:10px;background:#D4D0C8;"></div>
<svg class="p" style="left:783px;top:665px" width="10" height="6"><path d="M0.5 5.5 H9.5 L5 0.5 Z" fill="#fff" stroke="#000"/></svg>
<div class="p" style="left:222px;top:675px;width:575px;height:1px;background:#000;"></div>
<div class="p" style="left:222px;top:676px;width:575px;height:17px;background:#808080;"></div>
<div class="griph" style="left:226px;top:678px;"></div>
<div class="grip" style="left:225px;top:677px;"></div>
<svg class="p" style="left:236px;top:680px" width="5" height="9"><path d="M0 0 V9 L5 4.5 Z" fill="#fff"/></svg>
<div class="p t" style="left:245px;top:678px;color:#fff;font-weight:bold;font-size:12px;line-height:14px;">Risultati</div>
<div class="p" style="left:222px;top:693px;width:575px;height:1px;background:#000;"></div>
<div class="p" style="left:4px;top:695px;width:793px;height:1px;background:#fff;"></div>
</body></html>
